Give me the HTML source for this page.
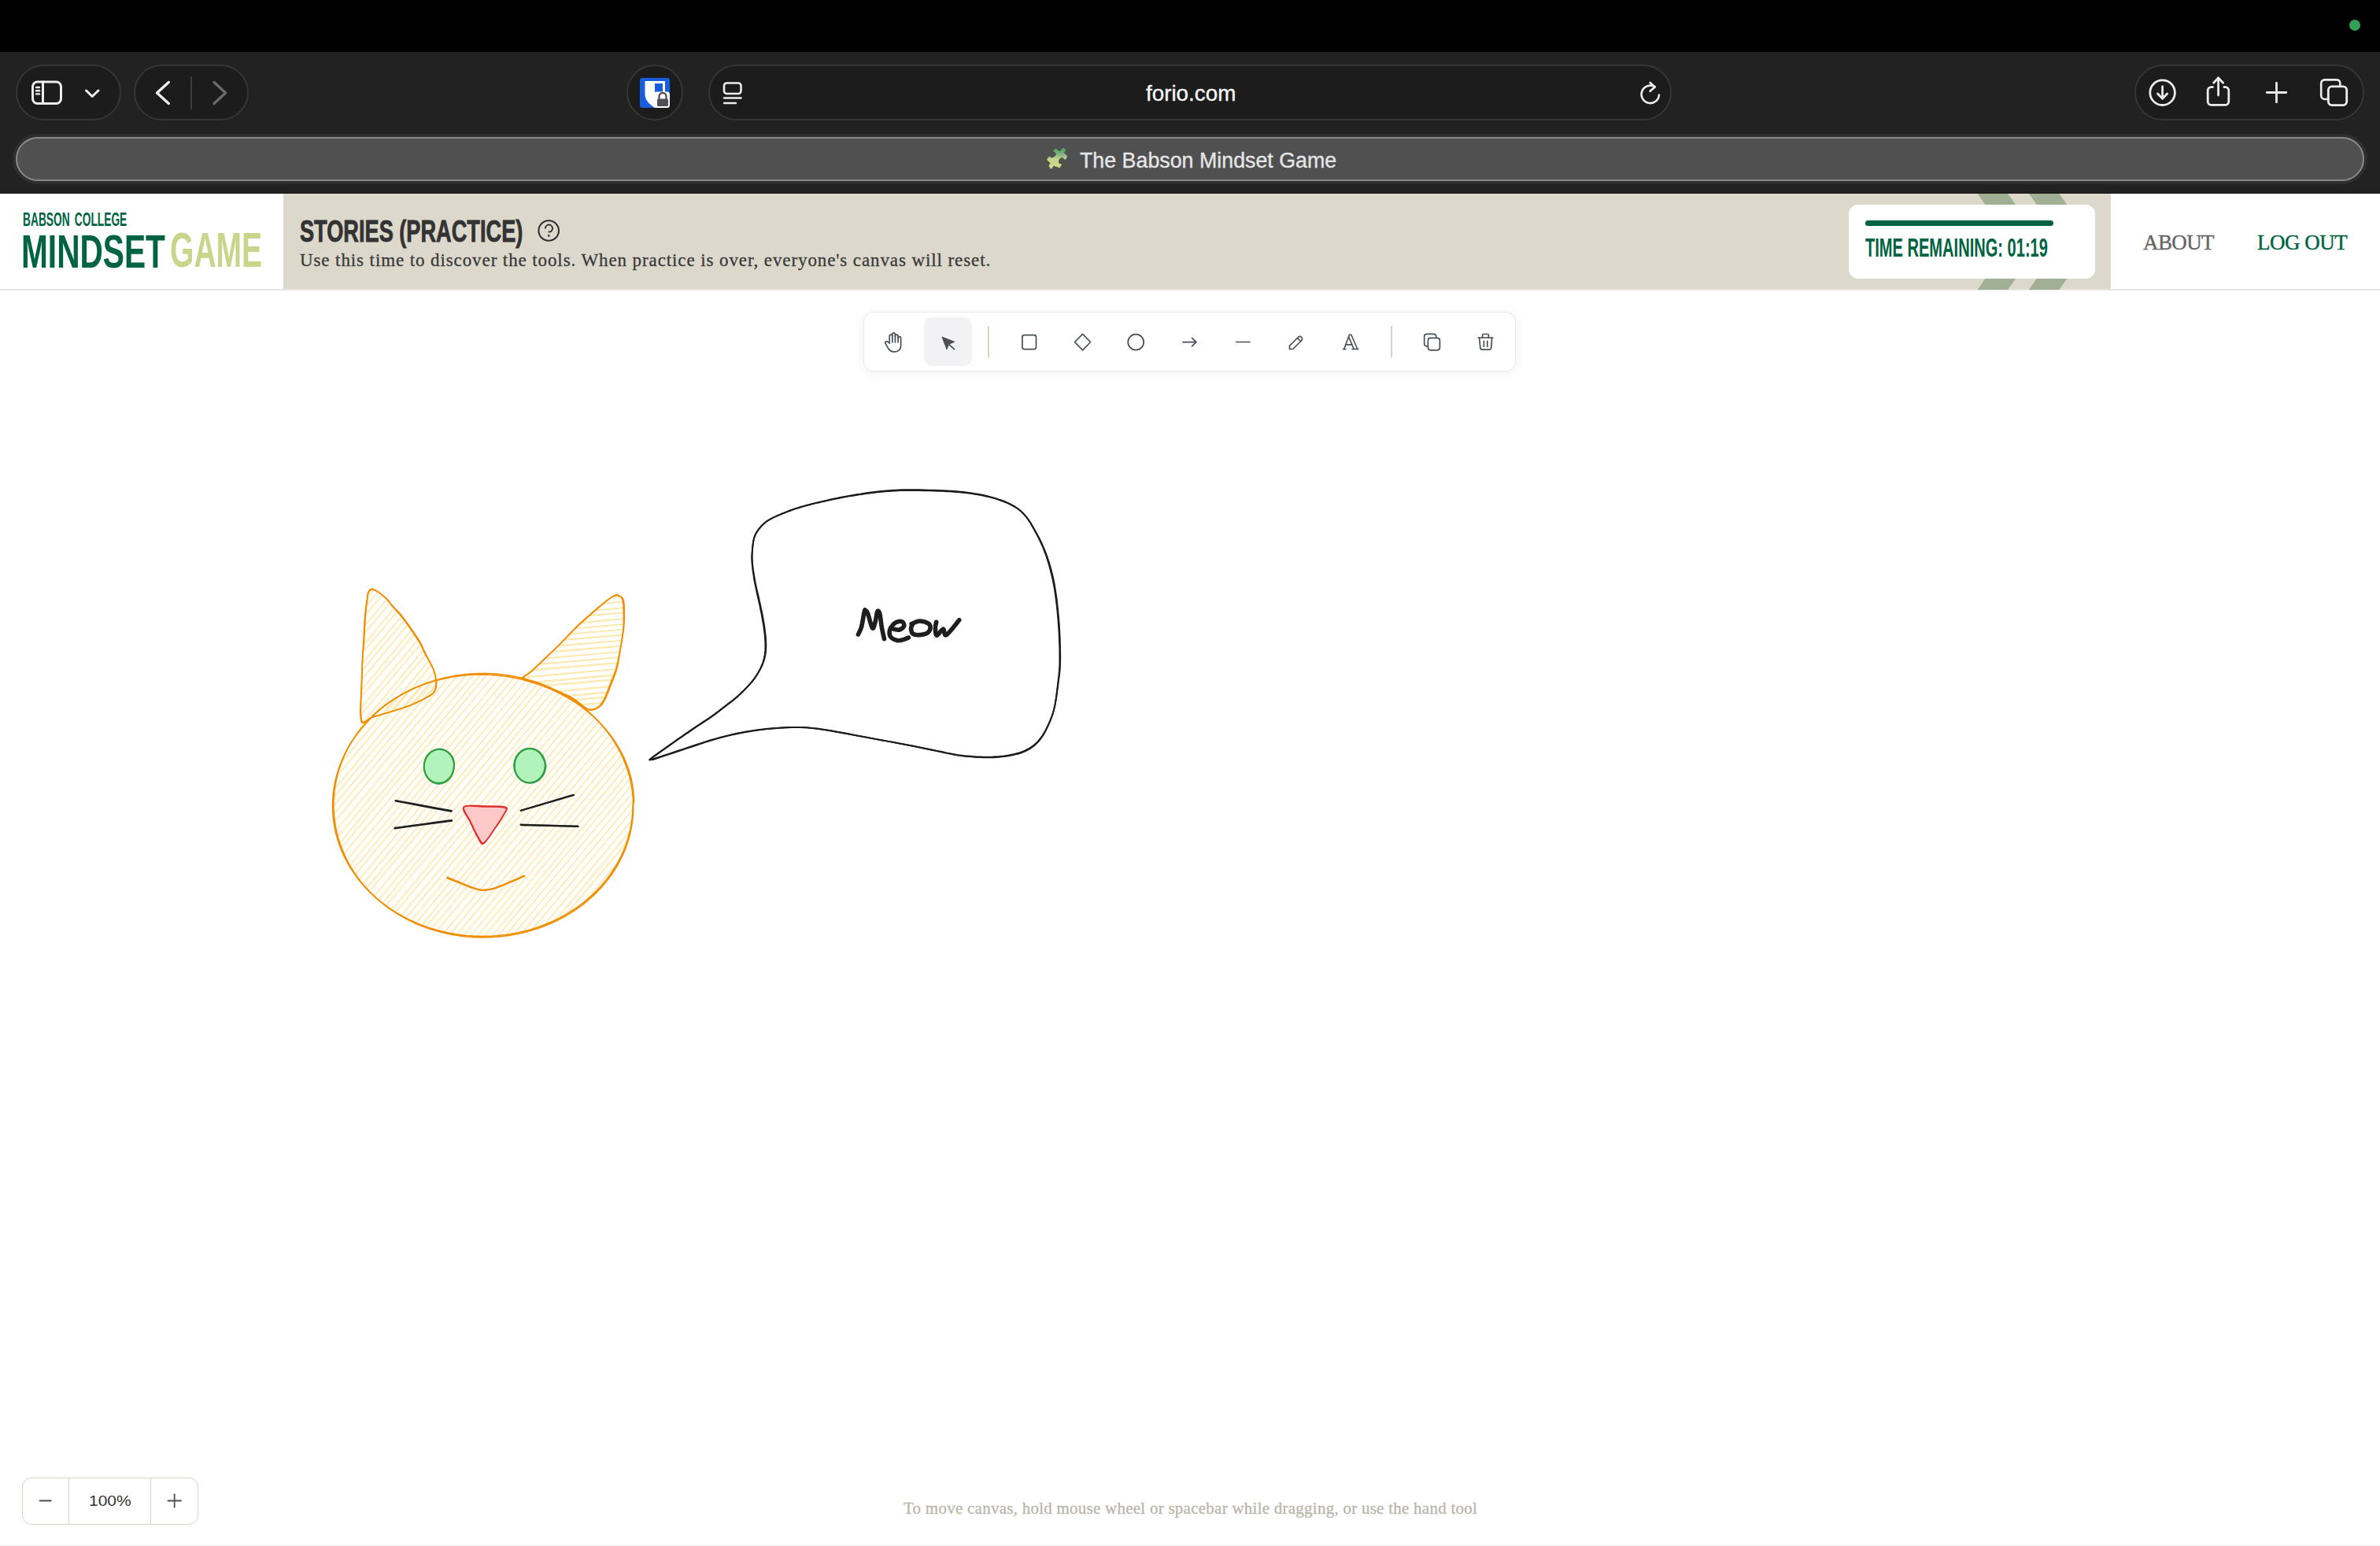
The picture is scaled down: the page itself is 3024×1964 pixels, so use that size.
<!DOCTYPE html>
<html><head><meta charset="utf-8">
<style>
*{margin:0;padding:0;box-sizing:border-box}
html,body{width:3024px;height:1964px;overflow:hidden;background:#fff;font-family:"Liberation Sans",sans-serif}
.a{position:absolute}
#top{left:0;top:0;width:3024px;height:66px;background:#000}
#tb{left:0;top:66px;width:3024px;height:180px;background:#222}
.pill{position:absolute;top:82px;height:71px;background:#1c1c1c;border:2px solid #363636;border-radius:36px}
#tabring{left:16px;top:170px;width:2992px;height:64px;background:#2f2f2f;border-radius:32px}
#tab{left:20px;top:174px;width:2984px;height:56px;background:#505050;border:2px solid #8a8a8a;border-radius:28px}
.ui{color:#ececec;font-size:27px;white-space:nowrap;-webkit-text-stroke:0.35px #ececec}
#hdr{left:0;top:246px;width:3024px;height:122px;background:#fff}
#hline{left:0;top:367px;width:3024px;height:2px;background:#e6e6e6}
#beige{left:360px;top:246px;width:2322px;height:122px;background:#dcd8cc;overflow:hidden}
.cond{display:inline-block;transform-origin:0 0;white-space:nowrap;font-weight:bold}
.serif{font-family:"Liberation Serif",serif}
</style></head><body>
<div class="a" id="top"></div>
<div class="a" style="left:2985px;top:25px;width:14px;height:14px;border-radius:7px;background:#33a157"></div>
<div class="a" id="tb"></div>

<!-- pills -->
<div class="pill" style="left:20px;width:134px"></div>
<div class="pill" style="left:170px;width:146px"></div>
<div class="pill" style="left:796px;width:72px"></div>
<div class="pill" style="left:900px;width:1224px"></div>
<div class="pill" style="left:2712px;width:292px"></div>

<div class="a" id="tabring"></div>
<div class="a" id="tab"></div>


<svg class="a" style="left:0;top:0" width="3024" height="246" fill="none" stroke-linecap="round" stroke-linejoin="round">
 <!-- sidebar -->
 <rect x="41.5" y="104" width="36" height="27.5" rx="6" stroke="#ececec" stroke-width="3"/>
 <line x1="54.5" y1="104" x2="54.5" y2="131.5" stroke="#ececec" stroke-width="3"/>
 <g stroke="#ececec" stroke-width="2.4"><line x1="46" y1="111" x2="50" y2="111"/><line x1="46" y1="115.2" x2="50" y2="115.2"/><line x1="46" y1="119.4" x2="50" y2="119.4"/></g>
 <polyline points="109.5,115 117.2,122.5 125,115" stroke="#ececec" stroke-width="3"/>
 <!-- back / fwd -->
 <polyline points="214.3,104.5 199.5,118 214.3,131.4" stroke="#ececec" stroke-width="3.4"/>
 <line x1="243" y1="98" x2="243" y2="138" stroke="#3e3e3e" stroke-width="2"/>
 <polyline points="272,104.5 286.6,118 272,131.4" stroke="#6b6b6e" stroke-width="3.4"/>
 <!-- reader -->
 <rect x="920" y="105.5" width="21.5" height="13.5" rx="3.5" stroke="#ececec" stroke-width="2.6"/>
 <line x1="920" y1="124.5" x2="941.5" y2="124.5" stroke="#ececec" stroke-width="2.4"/>
 <line x1="920" y1="131" x2="935" y2="131" stroke="#ececec" stroke-width="2.4"/>
 <!-- reload -->
 <path d="M2102.5 110.2 A11.2 11.2 0 1 0 2108 120.5" stroke="#ececec" stroke-width="2.6"/>
 <polyline points="2096.6,105 2102.8,110.4 2096.6,115.8" stroke="#ececec" stroke-width="2.6"/>
 <!-- download -->
 <circle cx="2747.6" cy="117.7" r="15.8" stroke="#ececec" stroke-width="2.8"/>
 <line x1="2747.6" y1="110" x2="2747.6" y2="125" stroke="#ececec" stroke-width="2.8"/>
 <polyline points="2741.5,119 2747.6,125.3 2753.7,119" stroke="#ececec" stroke-width="2.8"/>
 <!-- share -->
 <path d="M2811.5 110.6 H2809.5 A4.5 4.5 0 0 0 2805.2 115 V129 A4.5 4.5 0 0 0 2809.5 133.4 H2827.5 A4.5 4.5 0 0 0 2831.8 129 V115 A4.5 4.5 0 0 0 2827.5 110.6 H2825.8" stroke="#ececec" stroke-width="2.8"/>
 <line x1="2818.6" y1="99" x2="2818.6" y2="121" stroke="#ececec" stroke-width="2.8"/>
 <polyline points="2812.6,105.3 2818.6,99 2824.6,105.3" stroke="#ececec" stroke-width="2.8"/>
 <!-- plus -->
 <line x1="2880.3" y1="117.5" x2="2904.8" y2="117.5" stroke="#ececec" stroke-width="2.8"/>
 <line x1="2892.5" y1="105.3" x2="2892.5" y2="129.8" stroke="#ececec" stroke-width="2.8"/>
 <!-- tabs -->
 <path d="M2973.3 109.8 V105.5 A4.5 4.5 0 0 0 2969 101.4 H2953.7 A4.5 4.5 0 0 0 2949.2 105.5 V121.5 A4.5 4.5 0 0 0 2953.7 126 H2958.3" stroke="#ececec" stroke-width="2.6"/>
 <rect x="2958.3" y="109.8" width="23.4" height="23.8" rx="4.5" stroke="#ececec" stroke-width="2.8"/>
 <!-- bitwarden -->
 <rect x="813" y="99" width="38" height="38" rx="3" fill="#175ddc" stroke="none"/>
 <path d="M819.5 103 H845 V120 C845 128 838 133 832 137 C826 133 819.5 128 819.5 120 Z" fill="#fff" stroke="none"/>
 <path d="M832 106 H842 V120 C842 126 837 130 832 133 Z" fill="#175ddc" stroke="none"/>
 <rect x="830.5" y="116.5" width="20.5" height="20.5" rx="4" fill="#fff" stroke="none"/>
 <path d="M837.5 126 V122.5 A4.5 4.5 0 0 1 846.5 122.5 V126" stroke="#4f4f55" stroke-width="2.3"/>
 <rect x="835" y="125.5" width="14" height="9.5" rx="1.5" fill="#4f4f55" stroke="none"/>
 <!-- puzzle -->
 <defs><linearGradient id="pz" x1="0" y1="0" x2="0" y2="1"><stop offset="0" stop-color="#38a04e"/><stop offset="0.35" stop-color="#8fb489"/><stop offset="0.55" stop-color="#c6d68a"/><stop offset="1" stop-color="#cad98a"/></linearGradient></defs>
 <polygon points="1337.3,192.3 1340,189.1 1341.7,188.1 1343.4,189.4 1345.4,191.3 1347.3,191.1 1349.6,187.7 1351,187.2 1352.7,188.1 1355,190.6 1352.3,193.8 1356.9,198.7 1353.5,203.4 1350,200.7 1348.1,200.7 1346.1,202.4 1345.4,205.3 1345.9,207.3 1349.8,208.8 1346.1,214.2 1344.1,212.7 1338.7,211.2 1336.8,214.4 1334.6,214.9 1332.1,210.7 1334.1,207.3 1330.1,203.6 1330.1,201.7 1333.3,198 1335.5,199.9 1337.8,199.7 1340.7,197.7 1341.7,195.8 1340.2,193.8" fill="url(#pz)" stroke="#3a3a3a" stroke-width="0.6" stroke-linejoin="round"/>
</svg>
<div class="a ui" id="url" style="left:1456px;top:103px;font-size:27.8px;color:#f7f7f7;-webkit-text-stroke:0.35px #f7f7f7">forio.com</div>
<div class="a ui" id="tabt" style="left:1372px;top:188.5px;font-size:26.8px;color:#e6e6e6;-webkit-text-stroke:0.35px #e6e6e6">The Babson Mindset Game</div>

<div class="a" id="hdr"></div>
<div class="a" style="left:0;top:245px;width:3024px;height:1px;background:#141414"></div>
<div class="a" id="beige"></div>
<div class="a" id="hline"></div>


<!-- logo -->
<div class="a" id="logo1" style="left:29px;top:265px;color:#006341;font-size:24.5px;"><span class="cond" id="bc" style="transform:scaleX(0.562);word-spacing:4px">BABSON COLLEGE</span></div>
<div class="a" style="left:27px;top:286px;color:#006341;font-size:59px;"><span class="cond" id="mind" style="transform:scaleX(0.689)">MINDSET</span></div>
<div class="a" style="left:216px;top:281px;color:#c8d58b;font-size:63.5px;"><span class="cond" id="game" style="transform:scaleX(0.615)">GAME</span></div>
<div class="a" style="left:381px;top:273px;color:#333;font-size:38px;"><span class="cond" id="stories" style="transform:scaleX(0.715);-webkit-text-stroke:0.9px #333">STORIES (PRACTICE)</span></div>
<svg class="a" style="left:0;top:246px" width="760" height="122" fill="none" stroke="#2e2e2e" stroke-width="2" stroke-linecap="round"><circle cx="697.2" cy="47" r="12.8"/><path d="M693 43.6 A4.5 4.5 0 1 1 697.6 48.6"/><circle cx="697.3" cy="53.4" r="1.3" fill="#2e2e2e" stroke="none"/></svg>
<div class="a serif" id="sub" style="left:381px;top:318px;color:#3a3a3a;font-size:23px;letter-spacing:0.9px;-webkit-text-stroke:0.3px #3a3a3a;white-space:nowrap">Use this time to discover the tools. When practice is over, everyone's canvas will reset.</div>
<div class="a serif" id="about" style="left:2723px;top:293px;color:#666;font-size:27px;letter-spacing:-0.6px;-webkit-text-stroke:0.4px #666;white-space:nowrap">ABOUT</div>
<div class="a serif" id="logout" style="left:2868px;top:293px;color:#006341;font-size:27px;letter-spacing:-0.5px;-webkit-text-stroke:0.4px #006341;white-space:nowrap">LOG OUT</div>
<svg class="a" style="left:0;top:0" width="3024" height="400"><polygon fill="#a1b094" points="2512.6,246 2551.2,246 2594,307 2551.2,368 2512.6,368 2555.3,307"/><polygon fill="#a1b094" points="2578,246 2616.5,246 2659.3,307 2616.5,368 2578,368 2620.7,307"/></svg>
<div class="a" style="left:2349px;top:260px;width:313px;height:94px;background:#fff;border-radius:12px"></div>
<div class="a" style="left:2370px;top:280px;width:239px;height:7px;background:#006341;border-radius:4px"></div>
<div class="a" style="left:2370px;top:296px;color:#006341;font-size:33px;"><span class="cond" id="time" style="transform:scaleX(0.608)">TIME REMAINING: 01:19</span></div>

<!--CANVAS--><svg class="a" style="left:0;top:0" width="3024" height="1964" fill="none" stroke-linecap="round" stroke-linejoin="round"><defs><clipPath id="chead"><path d="M804.6 1022.8 C804.6 1035.2 803.0 1047.9 799.8 1060.0 C796.7 1072.0 791.8 1084.1 785.7 1095.3 C779.5 1106.4 771.8 1117.2 762.9 1126.9 C754.1 1136.6 743.8 1145.6 732.7 1153.4 C721.6 1161.1 709.2 1167.9 696.5 1173.3 C683.7 1178.6 669.9 1182.9 656.1 1185.6 C642.3 1188.4 627.8 1189.8 613.6 1189.8 C599.4 1189.8 584.9 1188.4 571.1 1185.6 C557.3 1182.9 543.5 1178.6 530.7 1173.3 C518.0 1167.9 505.6 1161.1 494.5 1153.4 C483.4 1145.6 473.1 1136.6 464.3 1126.9 C455.4 1117.2 447.7 1106.4 441.5 1095.3 C435.4 1084.1 430.5 1072.0 427.4 1060.0 C424.2 1047.9 422.6 1035.2 422.6 1022.8 C422.6 1010.4 424.2 997.7 427.4 985.6 C430.5 973.6 435.4 961.5 441.5 950.3 C447.7 939.2 455.4 928.4 464.3 918.7 C473.1 909.0 483.4 900.0 494.5 892.2 C505.6 884.5 518.0 877.7 530.7 872.3 C543.5 867.0 557.3 862.7 571.1 860.0 C584.9 857.2 599.4 855.8 613.6 855.8 C627.8 855.8 642.3 857.2 656.1 860.0 C669.9 862.7 683.7 867.0 696.5 872.3 C709.2 877.7 721.6 884.5 732.7 892.2 C743.8 900.0 754.1 909.0 762.9 918.7 C771.8 928.4 779.5 939.2 785.7 950.3 C791.8 961.5 796.7 973.6 799.8 985.6 C803.0 997.7 804.6 1010.4 804.6 1022.8 Z"/></clipPath><clipPath id="clear"><path d="M475.0 749.0 C478.4 749.9 484.8 754.6 488.8 758.1 C492.8 761.6 495.3 765.4 499.2 769.8 C503.1 774.2 506.8 776.9 512.4 784.3 C518.0 791.7 528.4 806.5 533.1 814.1 C537.8 821.7 537.7 824.1 540.6 830.0 C543.5 835.9 548.1 844.0 550.3 849.4 C552.4 854.8 553.0 858.5 553.5 862.3 C554.0 866.1 554.0 869.0 553.5 872.0 C553.0 875.0 552.4 878.0 550.3 880.5 C548.1 883.0 545.5 884.3 540.6 886.9 C535.8 889.5 528.8 893.1 521.2 896.0 C513.7 898.9 503.4 901.9 495.3 904.4 C487.2 906.9 478.6 909.0 472.6 910.9 C466.6 912.8 461.6 922.5 459.5 915.5 C457.4 908.5 459.5 883.0 459.7 868.8 C459.9 854.5 460.4 838.0 460.7 830.0 C461.0 822.0 460.8 828.8 461.3 820.6 C461.8 812.4 462.7 790.5 463.5 781.0 C464.3 771.5 465.2 768.0 466.0 763.3 C466.8 758.6 466.6 755.3 468.1 752.9 C469.6 750.5 471.6 748.1 475.0 749.0 Z"/></clipPath><clipPath id="crear"><path d="M785.2 756.4 C787.8 756.7 790.1 758.0 791.3 762.0 C792.5 766.0 792.4 774.4 792.5 780.7 C792.6 787.0 792.6 792.0 791.8 800.0 C791.0 808.0 788.9 820.2 787.5 828.5 C786.1 836.8 785.1 843.3 783.3 849.8 C781.5 856.3 779.4 861.1 776.9 867.6 C774.4 874.1 771.0 883.8 768.3 889.0 C765.6 894.2 763.6 896.6 760.5 898.9 C757.4 901.1 753.1 902.6 749.8 902.5 C746.5 902.4 743.9 900.3 740.6 898.2 C737.3 896.1 733.7 892.3 729.9 889.7 C726.1 887.1 722.8 885.1 717.8 882.6 C712.8 880.1 705.1 877.2 700.0 875.0 C694.9 872.8 693.2 871.5 687.3 869.3 C681.4 867.0 666.9 864.2 664.7 861.5 C662.6 858.8 669.5 857.5 674.4 853.1 C679.2 848.7 687.3 841.1 693.8 835.0 C700.3 828.9 706.7 822.7 713.2 816.2 C719.7 809.7 726.6 802.0 732.6 796.2 C738.6 790.4 744.6 785.5 749.4 781.3 C754.2 777.1 757.0 774.5 761.4 771.0 C765.8 767.5 771.6 762.4 775.6 760.0 C779.6 757.6 782.6 756.1 785.2 756.4 Z"/></clipPath></defs><g clip-path="url(#chead)" stroke="#ffe39a" stroke-width="0.95"><line x1="243.1" y1="1055.0" x2="581.5" y2="651.6"/><line x1="244.9" y1="1056.4" x2="582.1" y2="652.0"/><line x1="248.5" y1="1059.5" x2="586.9" y2="656.1"/><line x1="249.9" y1="1060.6" x2="587.3" y2="656.4"/><line x1="253.8" y1="1063.9" x2="592.3" y2="660.6"/><line x1="252.2" y1="1062.6" x2="591.8" y2="660.2"/><line x1="259.2" y1="1068.4" x2="597.6" y2="665.1"/><line x1="258.1" y1="1067.6" x2="597.3" y2="664.8"/><line x1="264.5" y1="1072.9" x2="603.0" y2="669.6"/><line x1="262.8" y1="1071.5" x2="602.5" y2="669.2"/><line x1="269.9" y1="1077.4" x2="608.4" y2="674.1"/><line x1="269.2" y1="1076.9" x2="608.2" y2="673.9"/><line x1="275.3" y1="1081.9" x2="613.7" y2="678.6"/><line x1="276.4" y1="1082.9" x2="614.1" y2="678.9"/><line x1="280.6" y1="1086.4" x2="619.1" y2="683.1"/><line x1="279.9" y1="1085.8" x2="618.9" y2="682.9"/><line x1="286.0" y1="1090.9" x2="624.4" y2="687.6"/><line x1="286.7" y1="1091.5" x2="624.7" y2="687.8"/><line x1="291.3" y1="1095.4" x2="629.8" y2="692.1"/><line x1="289.6" y1="1094.0" x2="629.3" y2="691.6"/><line x1="296.7" y1="1099.9" x2="635.2" y2="696.6"/><line x1="295.4" y1="1098.8" x2="634.8" y2="696.3"/><line x1="302.1" y1="1104.4" x2="640.5" y2="701.1"/><line x1="302.7" y1="1105.0" x2="640.7" y2="701.3"/><line x1="307.4" y1="1108.9" x2="645.9" y2="705.6"/><line x1="306.8" y1="1108.4" x2="645.7" y2="705.4"/><line x1="312.8" y1="1113.4" x2="651.3" y2="710.1"/><line x1="311.8" y1="1112.6" x2="651.0" y2="709.8"/><line x1="318.2" y1="1117.9" x2="656.6" y2="714.6"/><line x1="316.9" y1="1116.9" x2="656.2" y2="714.3"/><line x1="323.5" y1="1122.4" x2="662.0" y2="719.1"/><line x1="324.8" y1="1123.5" x2="662.4" y2="719.4"/><line x1="328.9" y1="1126.9" x2="667.3" y2="723.6"/><line x1="328.1" y1="1126.3" x2="667.1" y2="723.4"/><line x1="334.2" y1="1131.4" x2="672.7" y2="728.1"/><line x1="333.2" y1="1130.5" x2="672.4" y2="727.8"/><line x1="339.6" y1="1135.9" x2="678.1" y2="732.6"/><line x1="338.3" y1="1134.8" x2="677.7" y2="732.3"/><line x1="345.0" y1="1140.4" x2="683.4" y2="737.1"/><line x1="343.8" y1="1139.4" x2="683.1" y2="736.8"/><line x1="350.3" y1="1144.9" x2="688.8" y2="741.6"/><line x1="351.9" y1="1146.3" x2="689.3" y2="742.0"/><line x1="355.7" y1="1149.4" x2="694.2" y2="746.1"/><line x1="357.0" y1="1150.6" x2="694.6" y2="746.4"/><line x1="361.1" y1="1153.9" x2="699.5" y2="750.6"/><line x1="362.1" y1="1154.8" x2="699.8" y2="750.8"/><line x1="366.4" y1="1158.4" x2="704.9" y2="755.1"/><line x1="364.8" y1="1157.1" x2="704.4" y2="754.7"/><line x1="371.8" y1="1162.9" x2="710.2" y2="759.6"/><line x1="371.1" y1="1162.3" x2="710.0" y2="759.4"/><line x1="377.1" y1="1167.4" x2="715.6" y2="764.1"/><line x1="378.4" y1="1168.5" x2="716.0" y2="764.4"/><line x1="382.5" y1="1171.9" x2="721.0" y2="768.6"/><line x1="384.0" y1="1173.2" x2="721.4" y2="769.0"/><line x1="387.9" y1="1176.4" x2="726.3" y2="773.1"/><line x1="389.2" y1="1177.6" x2="726.7" y2="773.4"/><line x1="393.2" y1="1180.9" x2="731.7" y2="777.6"/><line x1="392.5" y1="1180.3" x2="731.5" y2="777.4"/><line x1="398.6" y1="1185.4" x2="737.1" y2="782.1"/><line x1="399.4" y1="1186.1" x2="737.3" y2="782.3"/><line x1="404.0" y1="1189.9" x2="742.4" y2="786.6"/><line x1="404.8" y1="1190.6" x2="742.7" y2="786.8"/><line x1="409.3" y1="1194.4" x2="747.8" y2="791.1"/><line x1="410.5" y1="1195.4" x2="748.1" y2="791.4"/><line x1="414.7" y1="1198.9" x2="753.1" y2="795.6"/><line x1="413.1" y1="1197.6" x2="752.7" y2="795.2"/><line x1="420.0" y1="1203.4" x2="758.5" y2="800.1"/><line x1="421.1" y1="1204.3" x2="758.8" y2="800.3"/><line x1="425.4" y1="1207.9" x2="763.9" y2="804.6"/><line x1="426.7" y1="1209.1" x2="764.3" y2="804.9"/><line x1="430.8" y1="1212.4" x2="769.2" y2="809.1"/><line x1="431.5" y1="1213.0" x2="769.4" y2="809.2"/><line x1="436.1" y1="1216.9" x2="774.6" y2="813.6"/><line x1="434.4" y1="1215.4" x2="774.1" y2="813.1"/><line x1="441.5" y1="1221.4" x2="780.0" y2="818.1"/><line x1="443.0" y1="1222.7" x2="780.4" y2="818.4"/><line x1="446.9" y1="1225.9" x2="785.3" y2="822.6"/><line x1="446.2" y1="1225.4" x2="785.1" y2="822.4"/><line x1="452.2" y1="1230.4" x2="790.7" y2="827.1"/><line x1="453.6" y1="1231.6" x2="791.1" y2="827.4"/><line x1="457.6" y1="1234.9" x2="796.0" y2="831.6"/><line x1="458.5" y1="1235.7" x2="796.3" y2="831.8"/><line x1="462.9" y1="1239.4" x2="801.4" y2="836.1"/><line x1="464.6" y1="1240.9" x2="801.9" y2="836.5"/><line x1="468.3" y1="1243.9" x2="806.8" y2="840.6"/><line x1="468.9" y1="1244.5" x2="807.0" y2="840.7"/><line x1="473.7" y1="1248.4" x2="812.1" y2="845.1"/><line x1="474.7" y1="1249.3" x2="812.4" y2="845.3"/><line x1="479.0" y1="1252.9" x2="817.5" y2="849.6"/><line x1="477.8" y1="1251.9" x2="817.1" y2="849.3"/><line x1="484.4" y1="1257.4" x2="822.9" y2="854.1"/><line x1="482.8" y1="1256.1" x2="822.4" y2="853.7"/><line x1="489.8" y1="1261.9" x2="828.2" y2="858.6"/><line x1="488.2" y1="1260.7" x2="827.8" y2="858.2"/><line x1="495.1" y1="1266.4" x2="833.6" y2="863.1"/><line x1="496.2" y1="1267.3" x2="833.9" y2="863.3"/><line x1="500.5" y1="1270.9" x2="838.9" y2="867.6"/><line x1="501.2" y1="1271.5" x2="839.2" y2="867.7"/><line x1="505.8" y1="1275.4" x2="844.3" y2="872.1"/><line x1="506.9" y1="1276.4" x2="844.6" y2="872.3"/><line x1="511.2" y1="1279.9" x2="849.7" y2="876.6"/><line x1="512.9" y1="1281.3" x2="850.2" y2="877.0"/><line x1="516.6" y1="1284.4" x2="855.0" y2="881.1"/><line x1="518.2" y1="1285.8" x2="855.5" y2="881.5"/><line x1="521.9" y1="1288.9" x2="860.4" y2="885.6"/><line x1="523.4" y1="1290.2" x2="860.8" y2="885.9"/><line x1="527.3" y1="1293.4" x2="865.8" y2="890.1"/><line x1="528.7" y1="1294.6" x2="866.2" y2="890.4"/><line x1="532.7" y1="1297.9" x2="871.1" y2="894.6"/><line x1="534.4" y1="1299.4" x2="871.7" y2="895.0"/><line x1="538.0" y1="1302.4" x2="876.5" y2="899.1"/><line x1="537.3" y1="1301.8" x2="876.3" y2="898.9"/><line x1="543.4" y1="1306.9" x2="881.8" y2="903.6"/><line x1="542.5" y1="1306.2" x2="881.6" y2="903.3"/><line x1="548.7" y1="1311.4" x2="887.2" y2="908.1"/><line x1="548.1" y1="1310.9" x2="887.0" y2="907.9"/><line x1="554.1" y1="1315.9" x2="892.6" y2="912.6"/><line x1="553.2" y1="1315.1" x2="892.3" y2="912.3"/><line x1="559.5" y1="1320.4" x2="897.9" y2="917.1"/><line x1="558.7" y1="1319.8" x2="897.7" y2="916.9"/><line x1="564.8" y1="1324.9" x2="903.3" y2="921.6"/><line x1="566.2" y1="1326.1" x2="903.7" y2="921.9"/><line x1="570.2" y1="1329.4" x2="908.7" y2="926.1"/><line x1="572.0" y1="1330.9" x2="909.2" y2="926.5"/><line x1="575.6" y1="1333.9" x2="914.0" y2="930.6"/><line x1="574.4" y1="1332.9" x2="913.7" y2="930.3"/><line x1="580.9" y1="1338.4" x2="919.4" y2="935.1"/><line x1="582.0" y1="1339.3" x2="919.7" y2="935.3"/><line x1="586.3" y1="1342.9" x2="924.7" y2="939.6"/><line x1="587.0" y1="1343.5" x2="925.0" y2="939.7"/><line x1="591.6" y1="1347.4" x2="930.1" y2="944.1"/><line x1="592.3" y1="1348.0" x2="930.3" y2="944.2"/><line x1="597.0" y1="1351.9" x2="935.5" y2="948.6"/><line x1="595.2" y1="1350.4" x2="934.9" y2="948.1"/><line x1="602.4" y1="1356.4" x2="940.8" y2="953.1"/><line x1="603.2" y1="1357.1" x2="941.1" y2="953.3"/><line x1="607.7" y1="1360.9" x2="946.2" y2="957.6"/><line x1="609.1" y1="1362.0" x2="946.6" y2="957.9"/><line x1="613.1" y1="1365.4" x2="951.5" y2="962.1"/><line x1="612.5" y1="1364.9" x2="951.4" y2="961.9"/><line x1="618.5" y1="1369.9" x2="956.9" y2="966.6"/><line x1="617.2" y1="1368.9" x2="956.5" y2="966.2"/><line x1="623.8" y1="1374.4" x2="962.3" y2="971.1"/><line x1="625.2" y1="1375.6" x2="962.7" y2="971.4"/><line x1="629.2" y1="1378.9" x2="967.6" y2="975.6"/><line x1="627.5" y1="1377.5" x2="967.1" y2="975.1"/><line x1="634.5" y1="1383.4" x2="973.0" y2="980.1"/><line x1="635.3" y1="1384.1" x2="973.2" y2="980.3"/><line x1="639.9" y1="1387.9" x2="978.4" y2="984.6"/><line x1="641.7" y1="1389.4" x2="978.9" y2="985.0"/><line x1="645.3" y1="1392.4" x2="983.7" y2="989.1"/><line x1="646.5" y1="1393.4" x2="984.1" y2="989.4"/></g><g clip-path="url(#clear)" stroke="#ffe39a" stroke-width="0.95"><line x1="356.4" y1="845.6" x2="493.4" y2="682.4"/><line x1="354.8" y1="844.2" x2="492.9" y2="682.0"/><line x1="361.8" y1="850.1" x2="498.7" y2="686.9"/><line x1="363.0" y1="851.1" x2="499.1" y2="687.2"/><line x1="367.1" y1="854.6" x2="504.1" y2="691.4"/><line x1="367.9" y1="855.2" x2="504.3" y2="691.6"/><line x1="372.5" y1="859.1" x2="509.5" y2="695.9"/><line x1="371.0" y1="857.8" x2="509.0" y2="695.5"/><line x1="377.9" y1="863.6" x2="514.8" y2="700.4"/><line x1="379.1" y1="864.6" x2="515.2" y2="700.7"/><line x1="383.2" y1="868.1" x2="520.2" y2="704.9"/><line x1="382.0" y1="867.1" x2="519.8" y2="704.6"/><line x1="388.6" y1="872.6" x2="525.5" y2="709.4"/><line x1="386.8" y1="871.1" x2="525.0" y2="709.0"/><line x1="394.0" y1="877.1" x2="530.9" y2="713.9"/><line x1="394.7" y1="877.8" x2="531.1" y2="714.1"/><line x1="399.3" y1="881.6" x2="536.3" y2="718.4"/><line x1="397.8" y1="880.3" x2="535.8" y2="718.0"/><line x1="404.7" y1="886.1" x2="541.6" y2="722.9"/><line x1="406.5" y1="887.6" x2="542.2" y2="723.4"/><line x1="410.0" y1="890.6" x2="547.0" y2="727.4"/><line x1="408.6" y1="889.4" x2="546.6" y2="727.0"/><line x1="415.4" y1="895.1" x2="552.4" y2="731.9"/><line x1="416.6" y1="896.2" x2="552.7" y2="732.2"/><line x1="420.8" y1="899.6" x2="557.7" y2="736.4"/><line x1="419.7" y1="898.7" x2="557.4" y2="736.1"/><line x1="426.1" y1="904.1" x2="563.1" y2="740.9"/><line x1="424.9" y1="903.1" x2="562.7" y2="740.6"/><line x1="431.5" y1="908.6" x2="568.4" y2="745.4"/><line x1="432.9" y1="909.8" x2="568.9" y2="745.8"/><line x1="436.9" y1="913.1" x2="573.8" y2="749.9"/><line x1="435.2" y1="911.8" x2="573.3" y2="749.5"/><line x1="442.2" y1="917.6" x2="579.2" y2="754.4"/><line x1="443.7" y1="918.9" x2="579.6" y2="754.8"/><line x1="447.6" y1="922.1" x2="584.5" y2="758.9"/><line x1="446.7" y1="921.4" x2="584.3" y2="758.7"/><line x1="452.9" y1="926.6" x2="589.9" y2="763.4"/><line x1="454.0" y1="927.5" x2="590.2" y2="763.7"/><line x1="458.3" y1="931.1" x2="595.3" y2="767.9"/><line x1="456.5" y1="929.6" x2="594.7" y2="767.4"/><line x1="463.7" y1="935.6" x2="600.6" y2="772.4"/><line x1="464.9" y1="936.6" x2="601.0" y2="772.7"/><line x1="469.0" y1="940.1" x2="606.0" y2="776.9"/><line x1="467.6" y1="938.9" x2="605.5" y2="776.5"/><line x1="474.4" y1="944.6" x2="611.3" y2="781.4"/><line x1="475.5" y1="945.6" x2="611.7" y2="781.7"/><line x1="479.7" y1="949.1" x2="616.7" y2="785.9"/><line x1="481.5" y1="950.6" x2="617.2" y2="786.4"/><line x1="485.1" y1="953.6" x2="622.1" y2="790.4"/><line x1="485.8" y1="954.2" x2="622.3" y2="790.6"/><line x1="490.5" y1="958.1" x2="627.4" y2="794.9"/><line x1="489.6" y1="957.4" x2="627.2" y2="794.7"/><line x1="495.8" y1="962.6" x2="632.8" y2="799.4"/><line x1="494.8" y1="961.8" x2="632.5" y2="799.1"/><line x1="501.2" y1="967.1" x2="638.2" y2="803.9"/><line x1="502.6" y1="968.3" x2="638.6" y2="804.2"/><line x1="506.6" y1="971.6" x2="643.5" y2="808.4"/><line x1="505.4" y1="970.6" x2="643.2" y2="808.1"/><line x1="511.9" y1="976.1" x2="648.9" y2="812.9"/><line x1="513.5" y1="977.5" x2="649.4" y2="813.3"/><line x1="517.3" y1="980.6" x2="654.2" y2="817.4"/><line x1="515.6" y1="979.2" x2="653.7" y2="817.0"/></g><g clip-path="url(#crear)" stroke="#ffe39a" stroke-width="0.95"><line x1="610.5" y1="731.4" x2="826.6" y2="712.5"/><line x1="610.3" y1="729.1" x2="826.6" y2="711.8"/><line x1="611.1" y1="738.4" x2="827.2" y2="719.5"/><line x1="611.0" y1="736.8" x2="827.2" y2="719.0"/><line x1="611.7" y1="745.3" x2="827.8" y2="726.4"/><line x1="611.6" y1="743.8" x2="827.8" y2="726.0"/><line x1="612.3" y1="752.3" x2="828.4" y2="733.4"/><line x1="612.4" y1="753.2" x2="828.5" y2="733.7"/><line x1="612.9" y1="759.3" x2="829.1" y2="740.4"/><line x1="613.1" y1="760.8" x2="829.1" y2="740.8"/><line x1="613.5" y1="766.3" x2="829.7" y2="747.3"/><line x1="613.4" y1="764.3" x2="829.6" y2="746.8"/><line x1="614.1" y1="773.2" x2="830.3" y2="754.3"/><line x1="613.9" y1="770.8" x2="830.2" y2="753.6"/><line x1="614.7" y1="780.2" x2="830.9" y2="761.3"/><line x1="614.7" y1="779.2" x2="830.9" y2="761.0"/><line x1="615.4" y1="787.2" x2="831.5" y2="768.3"/><line x1="615.5" y1="789.3" x2="831.5" y2="768.9"/><line x1="616.0" y1="794.1" x2="832.1" y2="775.2"/><line x1="615.8" y1="792.4" x2="832.1" y2="774.7"/><line x1="616.6" y1="801.1" x2="832.7" y2="782.2"/><line x1="616.7" y1="803.0" x2="832.8" y2="782.8"/><line x1="617.2" y1="808.1" x2="833.3" y2="789.2"/><line x1="617.3" y1="809.1" x2="833.4" y2="789.5"/><line x1="617.8" y1="815.1" x2="833.9" y2="796.2"/><line x1="617.7" y1="814.2" x2="833.9" y2="795.9"/><line x1="618.4" y1="822.0" x2="834.5" y2="803.1"/><line x1="618.3" y1="820.4" x2="834.5" y2="802.6"/><line x1="619.0" y1="829.0" x2="835.2" y2="810.1"/><line x1="618.9" y1="827.5" x2="835.1" y2="809.7"/><line x1="619.6" y1="836.0" x2="835.8" y2="817.1"/><line x1="619.4" y1="833.9" x2="835.7" y2="816.4"/><line x1="620.2" y1="843.0" x2="836.4" y2="824.1"/><line x1="620.2" y1="842.1" x2="836.4" y2="823.8"/><line x1="620.9" y1="849.9" x2="837.0" y2="831.0"/><line x1="620.7" y1="848.7" x2="837.0" y2="830.6"/><line x1="621.5" y1="856.9" x2="837.6" y2="838.0"/><line x1="621.3" y1="854.9" x2="837.5" y2="837.4"/><line x1="622.1" y1="863.9" x2="838.2" y2="845.0"/><line x1="622.2" y1="865.1" x2="838.2" y2="845.3"/><line x1="622.7" y1="870.9" x2="838.8" y2="851.9"/><line x1="622.9" y1="873.0" x2="838.9" y2="852.6"/><line x1="623.3" y1="877.8" x2="839.4" y2="858.9"/><line x1="623.1" y1="875.6" x2="839.4" y2="858.2"/><line x1="623.9" y1="884.8" x2="840.0" y2="865.9"/><line x1="624.1" y1="887.0" x2="840.1" y2="866.6"/><line x1="624.5" y1="891.8" x2="840.6" y2="872.9"/><line x1="624.7" y1="893.9" x2="840.7" y2="873.5"/><line x1="625.1" y1="898.7" x2="841.3" y2="879.8"/><line x1="625.0" y1="897.1" x2="841.2" y2="879.3"/><line x1="625.7" y1="905.7" x2="841.9" y2="886.8"/><line x1="625.5" y1="903.5" x2="841.8" y2="886.2"/><line x1="626.3" y1="912.7" x2="842.5" y2="893.8"/><line x1="626.2" y1="910.9" x2="842.4" y2="893.3"/><line x1="627.0" y1="919.7" x2="843.1" y2="900.8"/><line x1="626.9" y1="918.6" x2="843.1" y2="900.4"/><line x1="627.6" y1="926.6" x2="843.7" y2="907.7"/><line x1="627.7" y1="928.4" x2="843.7" y2="908.3"/><line x1="628.2" y1="933.6" x2="844.3" y2="914.7"/><line x1="628.0" y1="931.9" x2="844.3" y2="914.2"/><line x1="628.8" y1="940.6" x2="844.9" y2="921.7"/><line x1="628.9" y1="942.5" x2="845.0" y2="922.2"/></g><path d="M804.1 1022.8 L804.0 1027.5 L803.8 1032.1 L803.4 1036.8 L802.9 1041.5 L802.2 1046.1 L801.4 1050.7 L800.5 1055.3 L799.4 1059.8 L798.1 1064.3 L796.7 1068.8 L795.2 1073.3 L793.5 1077.7 L791.7 1082.1 L789.7 1086.5 L787.6 1090.7 L785.4 1095.0 L783.1 1099.1 L780.6 1103.2 L777.9 1107.3 L775.2 1111.3 L772.3 1115.2 L769.3 1119.1 L766.1 1122.8 L762.9 1126.5 L759.5 1130.1 L756.0 1133.6 L752.4 1137.1 L748.7 1140.4 L744.9 1143.7 L741.0 1146.9 L736.9 1149.9 L732.8 1152.9 L728.6 1155.7 L724.3 1158.5 L719.9 1161.1 L715.4 1163.7 L710.9 1166.1 L706.2 1168.5 L701.5 1170.7 L696.8 1172.8 L691.9 1174.7 L687.0 1176.6 L682.1 1178.3 L677.0 1179.9 L671.9 1181.4 L666.8 1182.8 L661.6 1184.0 L656.5 1185.2 L651.2 1186.1 L646.0 1187.0 L640.7 1187.7 L635.3 1188.3 L630.0 1188.8 L624.6 1189.2 L619.3 1189.4 L613.9 1189.5 L608.6 1189.4 L603.2 1189.2 L597.8 1188.9 L592.5 1188.5 L587.1 1187.9 L581.8 1187.2 L576.5 1186.4 L571.3 1185.4 L566.1 1184.3 L560.9 1183.1 L555.7 1181.8 L550.6 1180.3 L545.6 1178.7 L540.6 1177.0 L535.6 1175.2 L530.7 1173.2 L525.9 1171.1 L521.2 1169.0 L516.5 1166.7 L511.9 1164.2 L507.4 1161.7 L503.0 1159.1 L498.6 1156.3 L494.4 1153.5 L490.2 1150.5 L486.2 1147.5 L482.2 1144.3 L478.3 1141.1 L474.6 1137.7 L471.0 1134.3 L467.4 1130.8 L464.0 1127.2 L460.8 1123.5 L457.6 1119.7 L454.5 1115.9 L451.6 1111.9 L448.8 1107.9 L446.2 1103.9 L443.6 1099.8 L441.3 1095.6 L439.0 1091.3 L436.9 1087.1 L434.9 1082.7 L433.1 1078.3 L431.4 1073.9 L429.9 1069.4 L428.5 1064.9 L427.2 1060.3 L426.1 1055.7 L425.2 1051.1 L424.4 1046.5 L423.7 1041.9 L423.2 1037.2 L422.8 1032.5 L422.6 1027.8 L422.6 1023.1 L422.7 1018.5 L422.9 1013.8 L423.3 1009.1 L423.9 1004.4 L424.6 999.7 L425.4 995.1 L426.4 990.5 L427.6 985.9 L428.9 981.4 L430.3 976.8 L431.9 972.3 L433.6 967.9 L435.5 963.4 L437.5 959.1 L439.6 954.8 L441.9 950.5 L444.3 946.3 L446.8 942.2 L449.5 938.1 L452.3 934.1 L455.2 930.1 L458.3 926.2 L461.5 922.4 L464.7 918.7 L468.1 915.1 L471.7 911.6 L475.3 908.1 L479.0 904.7 L482.9 901.4 L486.8 898.2 L490.9 895.1 L495.0 892.2 L499.2 889.3 L503.5 886.5 L507.9 883.8 L512.4 881.3 L517.0 878.8 L521.7 876.5 L526.4 874.3 L531.1 872.2 L536.0 870.2 L540.8 868.3 L545.8 866.6 L550.8 865.0 L555.9 863.5 L561.0 862.1 L566.1 860.9 L571.3 859.7 L576.5 858.8 L581.7 857.9 L587.0 857.2 L592.3 856.6 L597.6 856.1 L603.0 855.8 L608.3 855.6 L613.6 855.5 L618.9 855.6 L624.2 855.8 L629.5 856.1 L634.9 856.6 L640.2 857.2 L645.4 857.9 L650.7 858.8 L655.9 859.8 L661.0 860.9 L666.2 862.1 L671.3 863.5 L676.3 865.0 L681.4 866.6 L686.3 868.3 L691.2 870.2 L696.1 872.2 L700.8 874.3 L705.5 876.5 L710.2 878.8 L714.8 881.3 L719.3 883.9 L723.7 886.5 L728.0 889.3 L732.2 892.2 L736.3 895.2 L740.4 898.3 L744.3 901.4 L748.2 904.7 L751.9 908.1 L755.6 911.6 L759.1 915.1 L762.5 918.8 L765.8 922.5 L768.9 926.3 L772.0 930.1 L774.9 934.1 L777.7 938.1 L780.4 942.2 L782.9 946.3 L785.4 950.5 L787.6 954.8 L789.8 959.1 L791.8 963.5 L793.6 967.9 L795.4 972.4 L796.9 976.9 L798.4 981.4 L799.7 985.9 L800.8 990.5 L801.8 995.1 L802.6 999.8 L803.3 1004.4 L803.9 1009.1 L804.3 1013.8 L804.5 1018.5 Z" stroke="#f08c00" stroke-width="1.60" fill="none"/><path d="M804.7 1021.9 L804.7 1026.6 L804.5 1031.4 L804.2 1036.1 L803.8 1040.8 L803.2 1045.5 L802.4 1050.2 L801.5 1054.9 L800.5 1059.5 L799.3 1064.1 L797.9 1068.6 L796.4 1073.2 L794.8 1077.7 L793.0 1082.2 L791.0 1086.6 L789.0 1090.9 L786.8 1095.2 L784.4 1099.5 L781.9 1103.7 L779.3 1107.8 L776.5 1111.9 L773.6 1115.9 L770.5 1119.8 L767.4 1123.6 L764.1 1127.4 L760.7 1131.0 L757.2 1134.6 L753.5 1138.1 L749.7 1141.5 L745.9 1144.8 L741.9 1148.1 L737.8 1151.2 L733.6 1154.2 L729.3 1157.1 L725.0 1159.9 L720.5 1162.6 L715.9 1165.2 L711.3 1167.6 L706.6 1170.0 L701.8 1172.2 L696.9 1174.3 L692.0 1176.3 L687.0 1178.2 L681.9 1179.9 L676.8 1181.6 L671.6 1183.1 L666.4 1184.4 L661.2 1185.7 L655.9 1186.8 L650.6 1187.8 L645.3 1188.6 L639.9 1189.3 L634.5 1189.9 L629.1 1190.3 L623.7 1190.7 L618.2 1190.8 L612.8 1190.9 L607.4 1190.8 L602.0 1190.6 L596.6 1190.2 L591.2 1189.7 L585.8 1189.1 L580.5 1188.3 L575.2 1187.5 L569.9 1186.4 L564.7 1185.3 L559.5 1184.0 L554.4 1182.6 L549.3 1181.1 L544.2 1179.4 L539.3 1177.6 L534.3 1175.7 L529.5 1173.7 L524.7 1171.6 L520.0 1169.3 L515.4 1166.9 L510.8 1164.4 L506.4 1161.8 L502.0 1159.1 L497.7 1156.3 L493.5 1153.3 L489.5 1150.3 L485.5 1147.2 L481.6 1144.0 L477.8 1140.6 L474.1 1137.2 L470.6 1133.7 L467.1 1130.1 L463.8 1126.4 L460.6 1122.7 L457.6 1118.9 L454.6 1114.9 L451.8 1110.9 L449.1 1106.9 L446.5 1102.8 L444.0 1098.6 L441.7 1094.4 L439.6 1090.1 L437.6 1085.7 L435.7 1081.3 L433.9 1076.9 L432.3 1072.4 L430.8 1067.9 L429.5 1063.4 L428.3 1058.8 L427.2 1054.2 L426.3 1049.6 L425.6 1044.9 L424.9 1040.2 L424.5 1035.6 L424.1 1030.9 L423.9 1026.2 L423.9 1021.5 L424.0 1016.8 L424.3 1012.2 L424.7 1007.5 L425.2 1002.8 L425.9 998.2 L426.8 993.6 L427.7 989.0 L428.8 984.4 L430.1 979.9 L431.5 975.4 L433.0 970.9 L434.7 966.5 L436.5 962.1 L438.5 957.8 L440.5 953.6 L442.7 949.4 L445.1 945.2 L447.6 941.1 L450.2 937.1 L452.9 933.2 L455.7 929.3 L458.7 925.5 L461.8 921.7 L465.0 918.1 L468.3 914.5 L471.7 911.1 L475.3 907.7 L478.9 904.4 L482.7 901.2 L486.6 898.0 L490.5 895.0 L494.6 892.1 L498.7 889.3 L502.9 886.6 L507.3 884.1 L511.7 881.6 L516.2 879.2 L520.8 876.9 L525.4 874.8 L530.1 872.8 L534.9 870.8 L539.7 869.1 L544.7 867.4 L549.6 865.8 L554.7 864.4 L559.7 863.1 L564.9 861.9 L570.0 860.9 L575.2 859.9 L580.4 859.1 L585.7 858.5 L591.0 857.9 L596.3 857.5 L601.6 857.2 L607.0 857.1 L612.3 857.0 L617.6 857.1 L623.0 857.3 L628.4 857.7 L633.7 858.2 L639.1 858.8 L644.4 859.5 L649.7 860.4 L654.9 861.4 L660.2 862.5 L665.4 863.7 L670.6 865.1 L675.7 866.6 L680.8 868.2 L685.9 869.9 L690.8 871.8 L695.7 873.7 L700.6 875.8 L705.4 878.0 L710.1 880.3 L714.8 882.7 L719.4 885.3 L723.9 887.9 L728.3 890.6 L732.6 893.4 L736.8 896.4 L740.9 899.4 L744.9 902.5 L748.9 905.8 L752.7 909.1 L756.4 912.5 L760.0 916.0 L763.4 919.5 L766.8 923.2 L770.0 926.9 L773.1 930.7 L776.1 934.6 L778.9 938.5 L781.6 942.5 L784.2 946.6 L786.7 950.7 L788.9 954.9 L791.1 959.1 L793.1 963.4 L795.0 967.8 L796.7 972.1 L798.3 976.6 L799.7 981.0 L801.0 985.5 L802.1 990.0 L803.0 994.5 L803.9 999.1 L804.5 1003.7 L805.0 1008.3 L805.4 1012.9 L805.6 1017.5 Z" stroke="#f08c00" stroke-width="1.60" fill="none"/><path d="M475.4 749.4 L476.8 749.9 L478.4 750.7 L480.1 751.7 L481.9 752.9 L483.8 754.3 L485.6 755.6 L487.3 757.0 L488.9 758.4 L490.3 759.7 L491.6 761.1 L492.9 762.5 L494.1 763.9 L495.3 765.4 L496.5 766.9 L497.8 768.5 L499.2 770.0 L500.6 771.6 L502.0 773.1 L503.5 774.6 L505.0 776.2 L506.7 777.9 L508.4 779.8 L510.2 782.0 L512.3 784.7 L514.6 787.7 L517.2 791.2 L520.0 795.1 L522.8 799.2 L525.6 803.2 L528.3 807.1 L530.6 810.7 L532.6 813.8 L534.2 816.5 L535.4 818.8 L536.4 820.8 L537.2 822.6 L537.9 824.3 L538.7 826.0 L539.5 827.9 L540.4 829.9 L541.6 832.2 L542.9 834.6 L544.2 837.1 L545.5 839.6 L546.9 842.2 L548.1 844.6 L549.2 846.9 L550.2 849.0 L550.9 851.0 L551.6 852.8 L552.1 854.5 L552.5 856.1 L552.9 857.7 L553.1 859.1 L553.4 860.6 L553.6 862.0 L553.8 863.3 L554.0 864.7 L554.0 865.9 L554.1 867.1 L554.1 868.3 L554.0 869.5 L553.9 870.6 L553.8 871.7 L553.6 872.9 L553.4 874.0 L553.1 875.1 L552.8 876.2 L552.4 877.3 L551.9 878.4 L551.3 879.4 L550.5 880.3 L549.7 881.2 L548.8 882.1 L547.8 882.8 L546.6 883.6 L545.4 884.4 L544.0 885.2 L542.4 886.0 L540.7 886.9 L538.8 888.0 L536.6 889.1 L534.4 890.2 L531.9 891.4 L529.4 892.6 L526.7 893.8 L524.0 895.0 L521.1 896.1 L518.1 897.3 L515.0 898.4 L511.7 899.5 L508.3 900.6 L504.9 901.6 L501.6 902.7 L498.3 903.7 L495.1 904.6 L492.0 905.6 L488.9 906.5 L485.9 907.3 L482.9 908.2 L480.1 909.0 L477.3 909.7 L474.8 910.5 L472.4 911.3 L470.2 912.4 L468.1 913.8 L466.2 915.3 L464.4 916.6 L462.8 917.6 L461.4 917.8 L460.3 917.1 L459.4 915.1 L458.8 911.7 L458.5 907.0 L458.4 901.3 L458.6 894.9 L458.8 888.2 L459.1 881.5 L459.4 875.1 L459.6 869.1 L459.7 863.5 L459.9 858.0 L460.0 852.6 L460.2 847.3 L460.4 842.3 L460.5 837.8 L460.7 833.8 L460.8 830.5 L460.9 828.1 L461.0 826.6 L461.1 825.8 L461.1 825.3 L461.2 824.8 L461.3 824.0 L461.4 822.4 L461.6 819.9 L461.8 816.4 L462.0 811.8 L462.3 806.7 L462.6 801.1 L462.9 795.5 L463.2 790.1 L463.5 785.3 L463.8 781.1 L464.1 777.7 L464.4 774.8 L464.7 772.3 L465.0 770.2 L465.3 768.2 L465.6 766.4 L465.9 764.7 L466.2 763.0 L466.4 761.4 L466.6 759.8 L466.7 758.3 L466.9 757.0 L467.1 755.8 L467.3 754.6 L467.7 753.6 L468.1 752.6 L468.7 751.8 L469.3 750.9 L470.0 750.2 L470.8 749.6 L471.6 749.1 L472.6 748.8 L473.7 748.7 Z" stroke="#f08c00" stroke-width="1.60" fill="none"/><path d="M476.1 749.7 L477.4 750.3 L479.0 751.1 L480.7 752.2 L482.5 753.4 L484.3 754.8 L486.1 756.2 L487.8 757.6 L489.3 759.0 L490.7 760.4 L492.0 761.7 L493.2 763.2 L494.3 764.6 L495.4 766.1 L496.6 767.6 L497.8 769.2 L499.2 770.8 L500.5 772.3 L501.9 773.8 L503.3 775.4 L504.8 776.9 L506.3 778.6 L508.0 780.6 L509.8 782.8 L511.8 785.4 L514.1 788.4 L516.6 791.9 L519.4 795.8 L522.2 799.8 L525.0 803.8 L527.6 807.7 L529.9 811.2 L531.9 814.3 L533.5 817.0 L534.7 819.2 L535.7 821.1 L536.5 822.9 L537.3 824.6 L538.0 826.3 L538.8 828.1 L539.8 830.1 L541.0 832.3 L542.3 834.7 L543.7 837.1 L545.1 839.6 L546.5 842.1 L547.7 844.5 L548.9 846.7 L549.9 848.8 L550.7 850.7 L551.4 852.5 L552.0 854.2 L552.5 855.7 L552.9 857.2 L553.3 858.6 L553.6 860.1 L553.8 861.4 L554.1 862.8 L554.3 864.0 L554.4 865.3 L554.5 866.4 L554.6 867.6 L554.6 868.7 L554.5 869.9 L554.4 871.0 L554.2 872.1 L554.0 873.3 L553.8 874.4 L553.5 875.5 L553.1 876.5 L552.6 877.6 L552.0 878.6 L551.2 879.6 L550.4 880.5 L549.5 881.3 L548.4 882.1 L547.3 882.9 L546.0 883.7 L544.6 884.5 L542.9 885.4 L541.2 886.4 L539.2 887.5 L537.0 888.6 L534.7 889.8 L532.2 891.0 L529.6 892.3 L526.9 893.5 L524.1 894.7 L521.2 895.9 L518.1 897.1 L514.9 898.2 L511.5 899.4 L508.1 900.5 L504.7 901.6 L501.3 902.7 L497.9 903.8 L494.7 904.8 L491.6 905.8 L488.4 906.7 L485.4 907.6 L482.3 908.5 L479.4 909.4 L476.7 910.2 L474.1 911.0 L471.7 911.8 L469.5 912.9 L467.4 914.3 L465.5 915.9 L463.7 917.3 L462.1 918.2 L460.8 918.5 L459.6 917.8 L458.8 915.8 L458.2 912.4 L457.9 907.8 L457.9 902.1 L458.1 895.7 L458.4 889.0 L458.7 882.3 L459.0 875.8 L459.3 869.9 L459.5 864.3 L459.7 858.7 L459.9 853.3 L460.1 848.0 L460.3 843.0 L460.6 838.4 L460.8 834.4 L461.0 831.1 L461.1 828.7 L461.3 827.1 L461.4 826.3 L461.5 825.8 L461.6 825.2 L461.8 824.3 L461.9 822.8 L462.1 820.2 L462.4 816.6 L462.7 812.0 L462.9 806.8 L463.3 801.2 L463.6 795.5 L463.9 790.1 L464.2 785.2 L464.5 781.0 L464.8 777.5 L465.1 774.6 L465.4 772.1 L465.7 769.9 L465.9 767.9 L466.2 766.1 L466.5 764.3 L466.7 762.6 L466.9 760.9 L467.0 759.3 L467.1 757.8 L467.2 756.4 L467.4 755.1 L467.6 754.0 L467.9 752.9 L468.3 751.9 L468.7 751.0 L469.3 750.2 L469.9 749.4 L470.6 748.8 L471.4 748.3 L472.3 748.0 L473.4 748.0 Z" stroke="#f08c00" stroke-width="1.60" fill="none"/><path d="M784.9 756.5 L785.9 756.7 L786.8 757.0 L787.6 757.4 L788.4 758.0 L789.2 758.8 L789.9 759.7 L790.5 760.9 L791.0 762.3 L791.4 764.0 L791.7 766.1 L791.9 768.3 L792.1 770.8 L792.2 773.3 L792.2 775.9 L792.3 778.5 L792.3 780.9 L792.4 783.3 L792.4 785.5 L792.4 787.8 L792.4 790.1 L792.3 792.4 L792.2 794.9 L792.0 797.5 L791.8 800.4 L791.4 803.6 L791.0 807.0 L790.5 810.7 L790.0 814.4 L789.4 818.2 L788.8 821.9 L788.2 825.4 L787.7 828.7 L787.2 831.7 L786.7 834.6 L786.2 837.4 L785.8 840.0 L785.3 842.6 L784.8 845.1 L784.2 847.5 L783.6 849.9 L782.9 852.3 L782.2 854.5 L781.4 856.7 L780.7 858.8 L779.8 860.9 L779.0 863.1 L778.1 865.4 L777.2 867.7 L776.2 870.3 L775.1 873.0 L774.0 875.9 L772.9 878.7 L771.8 881.6 L770.7 884.2 L769.6 886.6 L768.5 888.8 L767.5 890.6 L766.5 892.2 L765.6 893.6 L764.6 894.9 L763.7 895.9 L762.7 896.9 L761.6 897.8 L760.5 898.7 L759.2 899.5 L757.9 900.2 L756.5 900.8 L755.1 901.3 L753.7 901.7 L752.3 902.0 L751.0 902.1 L749.7 902.1 L748.4 902.0 L747.2 901.7 L746.1 901.3 L745.0 900.8 L743.8 900.1 L742.7 899.4 L741.5 898.7 L740.3 897.9 L739.0 897.0 L737.8 896.0 L736.4 894.9 L735.1 893.8 L733.8 892.7 L732.4 891.6 L731.0 890.5 L729.6 889.5 L728.2 888.5 L726.8 887.6 L725.4 886.7 L724.0 885.9 L722.6 885.0 L721.0 884.2 L719.3 883.3 L717.5 882.4 L715.6 881.5 L713.4 880.6 L711.2 879.6 L708.8 878.6 L706.5 877.7 L704.2 876.7 L702.1 875.8 L700.1 875.0 L698.4 874.2 L696.8 873.5 L695.4 872.9 L694.0 872.2 L692.6 871.6 L691.1 870.9 L689.3 870.2 L687.2 869.4 L684.7 868.5 L681.7 867.6 L678.3 866.7 L674.9 865.7 L671.7 864.7 L668.9 863.7 L666.7 862.7 L665.4 861.8 L664.9 860.8 L665.2 859.9 L666.1 859.1 L667.4 858.2 L669.0 857.2 L670.9 856.1 L672.8 854.8 L674.7 853.3 L676.7 851.5 L678.9 849.5 L681.3 847.3 L683.8 845.0 L686.3 842.6 L688.9 840.1 L691.5 837.7 L693.9 835.3 L696.4 833.0 L698.8 830.7 L701.2 828.3 L703.6 826.0 L706.0 823.6 L708.4 821.2 L710.8 818.8 L713.2 816.4 L715.6 813.9 L718.1 811.4 L720.5 808.8 L723.0 806.2 L725.4 803.6 L727.8 801.1 L730.1 798.7 L732.4 796.4 L734.6 794.2 L736.9 792.1 L739.1 790.1 L741.2 788.2 L743.3 786.4 L745.3 784.6 L747.2 782.9 L749.1 781.3 L750.8 779.8 L752.3 778.4 L753.8 777.1 L755.3 775.8 L756.7 774.6 L758.1 773.4 L759.6 772.1 L761.2 770.8 L762.9 769.4 L764.7 767.9 L766.5 766.4 L768.4 764.9 L770.3 763.4 L772.1 762.1 L773.8 760.9 L775.4 759.8 L776.9 758.9 L778.2 758.1 L779.5 757.5 L780.8 756.9 L782.0 756.5 L783.1 756.3 L784.2 756.1 Z" stroke="#f08c00" stroke-width="1.60" fill="none"/><path d="M786.0 756.8 L787.0 757.1 L787.9 757.4 L788.8 757.9 L789.7 758.5 L790.5 759.3 L791.1 760.2 L791.7 761.4 L792.3 762.9 L792.6 764.6 L792.9 766.7 L793.1 769.0 L793.3 771.4 L793.3 774.0 L793.3 776.6 L793.3 779.1 L793.3 781.6 L793.3 784.0 L793.3 786.2 L793.2 788.5 L793.1 790.8 L792.9 793.1 L792.7 795.6 L792.5 798.2 L792.1 801.1 L791.7 804.3 L791.1 807.7 L790.5 811.3 L789.9 815.0 L789.2 818.8 L788.5 822.4 L787.9 825.9 L787.2 829.2 L786.7 832.2 L786.1 835.1 L785.5 837.8 L785.0 840.4 L784.4 842.9 L783.8 845.4 L783.2 847.8 L782.5 850.2 L781.8 852.5 L781.0 854.7 L780.2 856.8 L779.4 858.9 L778.6 861.0 L777.7 863.1 L776.8 865.3 L775.9 867.6 L774.9 870.2 L773.9 872.9 L772.8 875.7 L771.7 878.5 L770.6 881.3 L769.5 883.9 L768.5 886.3 L767.5 888.4 L766.5 890.2 L765.6 891.8 L764.8 893.1 L763.9 894.3 L763.0 895.4 L762.1 896.3 L761.2 897.2 L760.1 898.0 L759.0 898.8 L757.8 899.5 L756.5 900.1 L755.2 900.6 L753.9 901.0 L752.6 901.3 L751.3 901.4 L750.1 901.4 L749.0 901.3 L747.9 901.0 L746.8 900.6 L745.8 900.1 L744.7 899.4 L743.6 898.8 L742.5 898.0 L741.4 897.2 L740.2 896.4 L738.9 895.4 L737.7 894.4 L736.4 893.3 L735.0 892.2 L733.7 891.1 L732.3 890.0 L730.9 889.0 L729.5 888.1 L728.1 887.2 L726.7 886.4 L725.2 885.6 L723.7 884.8 L722.1 884.0 L720.4 883.1 L718.5 882.3 L716.5 881.4 L714.3 880.5 L712.0 879.6 L709.6 878.6 L707.1 877.7 L704.8 876.8 L702.5 876.0 L700.5 875.2 L698.6 874.5 L697.0 873.8 L695.4 873.1 L694.0 872.5 L692.5 871.9 L690.8 871.3 L689.0 870.6 L686.8 869.8 L684.1 869.0 L681.0 868.2 L677.6 867.3 L674.1 866.3 L670.8 865.3 L667.9 864.4 L665.7 863.4 L664.3 862.4 L663.8 861.5 L664.0 860.6 L664.9 859.8 L666.1 858.9 L667.8 857.9 L669.6 856.8 L671.5 855.5 L673.4 854.0 L675.5 852.2 L677.7 850.2 L680.0 848.0 L682.6 845.6 L685.2 843.2 L687.8 840.8 L690.4 838.3 L692.9 835.9 L695.4 833.6 L697.9 831.2 L700.4 828.9 L702.9 826.5 L705.4 824.1 L707.9 821.7 L710.4 819.3 L712.9 816.8 L715.4 814.3 L717.9 811.7 L720.5 809.0 L723.0 806.4 L725.5 803.8 L728.0 801.2 L730.5 798.8 L732.9 796.5 L735.2 794.2 L737.5 792.1 L739.8 790.1 L742.0 788.1 L744.2 786.3 L746.2 784.5 L748.2 782.7 L750.1 781.1 L751.9 779.5 L753.5 778.1 L755.0 776.7 L756.5 775.4 L757.9 774.2 L759.4 772.9 L760.9 771.6 L762.5 770.3 L764.1 768.9 L765.9 767.4 L767.8 765.8 L769.6 764.3 L771.4 762.8 L773.2 761.4 L774.8 760.2 L776.4 759.1 L777.8 758.2 L779.1 757.4 L780.3 756.8 L781.5 756.2 L782.6 755.8 L783.6 755.5 L784.6 755.4 Z" stroke="#f08c00" stroke-width="1.60" fill="none"/><path d="M577.0 973.6 C577.0 976.4 576.5 979.4 575.6 982.0 C574.6 984.6 573.1 987.2 571.4 989.2 C569.7 991.1 567.5 992.9 565.3 993.9 C563.0 995.0 560.4 995.6 558.0 995.6 C555.6 995.6 553.0 995.0 550.7 993.9 C548.5 992.9 546.3 991.1 544.6 989.2 C542.9 987.2 541.4 984.6 540.4 982.0 C539.5 979.4 539.0 976.4 539.0 973.6 C539.0 970.8 539.5 967.8 540.4 965.2 C541.4 962.6 542.9 960.0 544.6 958.0 C546.3 956.1 548.5 954.3 550.7 953.3 C553.0 952.2 555.6 951.6 558.0 951.6 C560.4 951.6 563.0 952.2 565.3 953.3 C567.5 954.3 569.7 956.1 571.4 958.0 C573.1 960.0 574.6 962.6 575.6 965.2 C576.5 967.8 577.0 970.8 577.0 973.6 Z" fill="#b2f2bb" stroke="none"/><path d="M576.9 973.5 C576.8 976.3 576.3 979.4 575.3 982.0 C574.4 984.6 572.9 987.2 571.2 989.2 C569.4 991.2 567.2 993.0 565.0 994.0 C562.7 995.1 560.1 995.8 557.7 995.8 C555.3 995.8 552.7 995.2 550.4 994.1 C548.2 993.1 546.0 991.4 544.3 989.4 C542.6 987.4 541.1 984.9 540.2 982.3 C539.3 979.7 538.8 976.7 538.8 973.9 C538.9 971.1 539.4 968.1 540.4 965.5 C541.3 962.9 542.8 960.3 544.6 958.4 C546.3 956.4 548.6 954.7 550.8 953.6 C553.1 952.5 555.7 951.9 558.2 951.9 C560.6 951.9 563.3 952.4 565.5 953.5 C567.8 954.6 570.0 956.3 571.7 958.2 C573.4 960.2 575.0 962.8 575.9 965.3 C576.7 967.9 576.9 970.8 576.9 973.5 Z" stroke="#2f9e44" stroke-width="1.90" fill="none"/><path d="M576.8 973.6 C576.6 976.2 576.1 979.2 575.1 981.8 C574.1 984.3 572.6 986.8 570.8 988.7 C569.0 990.6 566.7 992.3 564.5 993.3 C562.2 994.3 559.5 994.9 557.1 994.8 C554.7 994.8 552.1 994.1 549.8 993.1 C547.6 992.0 545.4 990.2 543.8 988.3 C542.1 986.3 540.7 983.7 539.8 981.1 C538.9 978.6 538.5 975.6 538.6 972.8 C538.7 970.0 539.3 967.1 540.3 964.5 C541.3 962.0 542.9 959.5 544.7 957.6 C546.5 955.6 548.8 954.0 551.1 953.0 C553.4 952.0 556.1 951.5 558.6 951.5 C561.1 951.6 563.8 952.3 566.1 953.4 C568.3 954.6 570.6 956.4 572.3 958.4 C574.1 960.5 575.7 963.2 576.4 965.7 C577.2 968.3 577.1 970.9 576.8 973.6 Z" stroke="#2f9e44" stroke-width="1.90" fill="none"/><path d="M692.7 972.5 C692.7 975.3 692.2 978.4 691.2 981.0 C690.2 983.6 688.7 986.2 686.9 988.2 C685.2 990.2 682.9 991.9 680.5 993.0 C678.2 994.1 675.5 994.7 673.0 994.7 C670.5 994.7 667.8 994.1 665.5 993.0 C663.1 991.9 660.8 990.2 659.1 988.2 C657.3 986.2 655.8 983.6 654.8 981.0 C653.8 978.4 653.3 975.3 653.3 972.5 C653.3 969.7 653.8 966.6 654.8 964.0 C655.8 961.4 657.3 958.8 659.1 956.8 C660.8 954.8 663.1 953.1 665.5 952.0 C667.8 950.9 670.5 950.3 673.0 950.3 C675.5 950.3 678.2 950.9 680.5 952.0 C682.9 953.1 685.2 954.8 686.9 956.8 C688.7 958.8 690.2 961.4 691.2 964.0 C692.2 966.6 692.7 969.7 692.7 972.5 Z" fill="#b2f2bb" stroke="none"/><path d="M692.7 972.5 C692.6 975.2 692.1 978.3 691.1 980.9 C690.1 983.4 688.5 986.0 686.7 988.0 C684.9 989.9 682.6 991.7 680.3 992.7 C677.9 993.8 675.2 994.4 672.7 994.4 C670.2 994.4 667.5 993.8 665.1 992.7 C662.8 991.6 660.5 989.9 658.8 987.9 C657.0 986.0 655.5 983.4 654.6 980.8 C653.6 978.2 653.1 975.2 653.1 972.4 C653.2 969.6 653.7 966.6 654.7 964.0 C655.7 961.4 657.3 958.9 659.1 956.9 C660.9 954.9 663.2 953.2 665.6 952.2 C667.9 951.1 670.7 950.6 673.2 950.6 C675.8 950.6 678.5 951.2 680.8 952.3 C683.2 953.4 685.5 955.1 687.2 957.1 C689.0 959.1 690.6 961.7 691.5 964.3 C692.4 966.8 692.8 969.7 692.7 972.5 Z" stroke="#2f9e44" stroke-width="1.90" fill="none"/><path d="M693.5 971.9 C693.7 974.7 693.0 977.9 692.1 980.6 C691.1 983.3 689.6 985.9 687.8 988.0 C686.1 990.1 683.8 991.9 681.4 993.0 C679.1 994.2 676.4 994.9 673.9 994.9 C671.3 995.0 668.6 994.5 666.3 993.5 C663.9 992.4 661.6 990.8 659.8 988.8 C658.0 986.9 656.4 984.3 655.4 981.8 C654.4 979.2 653.8 976.2 653.8 973.4 C653.7 970.5 654.2 967.5 655.1 964.9 C656.0 962.3 657.5 959.7 659.2 957.7 C660.9 955.7 663.2 953.9 665.4 952.8 C667.7 951.7 670.3 951.1 672.8 951.0 C675.3 951.0 677.9 951.5 680.2 952.6 C682.4 953.6 684.7 955.3 686.4 957.2 C688.1 959.1 689.4 961.8 690.6 964.2 C691.7 966.7 693.2 969.2 693.5 971.9 Z" stroke="#2f9e44" stroke-width="1.90" fill="none"/><path d="M590.0 1024.6 C593.0 1021.3 607.2 1023.9 616.0 1024.0 C624.8 1024.1 638.3 1023.6 642.5 1025.3 C646.7 1027.0 643.4 1029.2 641.0 1034.0 C638.6 1038.8 632.3 1047.8 628.0 1054.0 C623.7 1060.2 618.3 1069.3 615.0 1071.0 C611.7 1072.7 610.8 1068.5 608.0 1064.0 C605.2 1059.5 601.0 1050.6 598.0 1044.0 C595.0 1037.4 587.0 1027.9 590.0 1024.6 Z" fill="#ffc9c9" stroke="none"/><path d="M589.7 1024.8 C592.7 1021.5 607.0 1024.0 615.7 1024.1 C624.4 1024.2 638.0 1023.7 642.2 1025.3 C646.4 1027.0 643.1 1029.2 640.7 1033.9 C638.3 1038.7 632.0 1047.7 627.7 1053.9 C623.4 1060.0 618.1 1069.1 614.7 1070.8 C611.4 1072.4 610.6 1068.2 607.8 1063.7 C605.0 1059.2 600.8 1050.2 597.8 1043.7 C594.8 1037.2 586.7 1028.1 589.7 1024.8 Z" stroke="#e03131" stroke-width="1.60" fill="none"/><path d="M589.2 1025.5 C592.1 1022.2 606.4 1024.8 615.1 1024.9 C623.9 1025.0 637.4 1024.5 641.6 1026.2 C645.8 1027.9 642.5 1030.1 640.1 1034.9 C637.7 1039.6 631.5 1048.7 627.2 1054.8 C622.9 1060.9 617.6 1070.1 614.3 1071.7 C611.0 1073.4 610.2 1069.2 607.4 1064.6 C604.6 1060.1 600.6 1051.0 597.5 1044.5 C594.5 1038.0 586.3 1028.7 589.2 1025.5 Z" stroke="#e03131" stroke-width="1.60" fill="none"/><path d="M502.6 1017.0 C508.5 1018.1 526.3 1021.3 538.2 1023.5 C550.1 1025.7 567.8 1029.0 573.8 1030.1" stroke="#1e1e1e" stroke-width="2.00" fill="none"/><path d="M502.6 1017.5 C508.5 1018.6 526.1 1022.0 537.9 1024.2 C549.7 1026.4 567.4 1029.7 573.3 1030.8" stroke="#1e1e1e" stroke-width="2.00" fill="none"/><path d="M501.5 1052.5 C507.6 1051.7 525.9 1049.1 538.0 1047.5 C550.1 1045.9 568.2 1043.5 574.2 1042.7" stroke="#1e1e1e" stroke-width="2.00" fill="none"/><path d="M501.6 1051.8 C507.6 1051.0 525.7 1048.5 537.7 1046.9 C549.7 1045.3 567.7 1042.8 573.7 1042.0" stroke="#1e1e1e" stroke-width="2.00" fill="none"/><path d="M662.0 1029.6 C667.6 1028.0 684.2 1023.2 695.4 1019.9 C706.5 1016.6 723.4 1011.7 729.0 1010.0" stroke="#1e1e1e" stroke-width="2.00" fill="none"/><path d="M661.6 1029.8 C667.2 1028.1 683.9 1023.1 695.1 1019.8 C706.2 1016.4 723.0 1011.4 728.6 1009.8" stroke="#1e1e1e" stroke-width="2.00" fill="none"/><path d="M661.5 1047.6 C667.5 1047.8 685.5 1048.3 697.6 1048.6 C709.7 1048.9 728.0 1049.3 734.0 1049.4" stroke="#1e1e1e" stroke-width="2.00" fill="none"/><path d="M662.1 1048.3 C668.2 1048.4 686.4 1048.8 698.5 1049.1 C710.7 1049.4 728.8 1049.8 734.9 1049.9" stroke="#1e1e1e" stroke-width="2.00" fill="none"/><path d="M568.2 1115.3 C573.0 1117.2 589.7 1124.1 596.9 1126.7 C604.2 1129.3 606.3 1130.7 611.7 1130.9 C617.1 1131.1 620.2 1131.1 629.2 1128.1 C638.2 1125.0 659.6 1115.3 665.7 1112.7" stroke="#f08c00" stroke-width="2.00" fill="none"/><path d="M568.5 1114.7 C573.3 1116.7 590.1 1123.7 597.5 1126.4 C604.8 1129.1 607.0 1130.4 612.4 1130.7 C617.8 1131.0 621.0 1131.0 630.1 1128.0 C639.1 1125.1 660.5 1115.4 666.6 1112.9" stroke="#f08c00" stroke-width="2.00" fill="none"/><path d="M825.3 965.3 L829.3 962.2 L834.5 958.5 L840.1 954.5 L845.8 950.5 L851.5 946.5 L857.0 942.5 L862.1 939.0 L866.8 935.7 L871.1 932.7 L875.0 930.1 L878.4 927.7 L881.5 925.6 L884.3 923.7 L886.9 922.0 L889.3 920.4 L891.5 918.9 L893.5 917.6 L895.4 916.4 L897.2 915.2 L898.8 914.2 L900.5 913.1 L902.1 912.0 L903.8 910.8 L905.6 909.5 L907.5 908.2 L909.5 906.7 L911.6 905.1 L913.7 903.4 L915.9 901.8 L918.0 900.1 L920.1 898.5 L922.1 897.0 L924.0 895.5 L925.9 894.1 L927.7 892.7 L929.5 891.3 L931.2 890.0 L933.0 888.6 L934.7 887.1 L936.5 885.6 L938.2 884.0 L940.0 882.4 L941.8 880.7 L943.6 878.9 L945.3 877.2 L947.0 875.4 L948.6 873.7 L950.2 872.1 L951.6 870.5 L952.9 869.0 L954.2 867.5 L955.4 866.1 L956.5 864.6 L957.7 863.1 L958.8 861.6 L959.8 860.1 L960.9 858.5 L961.9 856.8 L963.0 855.1 L963.9 853.3 L964.9 851.6 L965.8 849.8 L966.6 848.1 L967.4 846.4 L968.1 844.7 L968.8 843.0 L969.4 841.3 L969.9 839.7 L970.4 838.1 L970.8 836.4 L971.2 834.8 L971.5 833.1 L971.8 831.5 L972.0 829.8 L972.1 828.1 L972.3 826.4 L972.4 824.6 L972.4 822.8 L972.4 820.9 L972.4 818.9 L972.4 816.8 L972.3 814.7 L972.1 812.4 L972.0 810.1 L971.8 807.6 L971.5 805.0 L971.2 802.2 L970.8 799.3 L970.4 796.3 L969.9 793.1 L969.3 789.8 L968.7 786.3 L968.1 782.8 L967.4 779.1 L966.6 775.5 L965.9 771.7 L965.1 767.9 L964.2 764.1 L963.3 760.2 L962.5 756.3 L961.6 752.5 L960.8 748.6 L960.0 744.8 L959.2 741.1 L958.5 737.5 L957.9 733.9 L957.4 730.4 L956.9 727.1 L956.4 723.8 L956.1 720.7 L955.8 717.8 L955.5 715.1 L955.4 712.7 L955.3 710.4 L955.3 708.3 L955.3 706.3 L955.4 704.4 L955.5 702.6 L955.7 700.7 L955.8 698.9 L956.0 697.0 L956.2 695.1 L956.4 693.2 L956.6 691.4 L956.9 689.5 L957.2 687.7 L957.6 686.0 L958.0 684.4 L958.4 683.0 L958.9 681.6 L959.4 680.2 L960.0 679.0 L960.6 677.7 L961.3 676.5 L962.1 675.2 L963.0 673.9 L964.0 672.5 L965.1 671.1 L966.3 669.6 L967.6 668.2 L969.0 666.7 L970.6 665.3 L972.2 663.9 L973.9 662.5 L975.8 661.2 L977.8 660.0 L980.0 658.8 L982.2 657.6 L984.6 656.5 L987.0 655.4 L989.6 654.3 L992.3 653.1 L995.0 652.0 L997.9 650.8 L1000.9 649.7 L1003.9 648.5 L1007.1 647.4 L1010.5 646.2 L1014.0 645.1 L1017.6 643.9 L1021.4 642.8 L1025.3 641.7 L1029.4 640.7 L1033.5 639.6 L1037.7 638.6 L1042.0 637.6 L1046.3 636.6 L1050.5 635.6 L1054.8 634.7 L1059.0 633.8 L1063.2 632.9 L1067.5 632.0 L1071.7 631.2 L1075.9 630.4 L1080.1 629.6 L1084.3 628.9 L1088.5 628.2 L1092.7 627.6 L1096.9 626.9 L1101.1 626.3 L1105.2 625.8 L1109.3 625.3 L1113.4 624.8 L1117.4 624.3 L1121.3 623.9 L1125.2 623.5 L1129.1 623.2 L1133.0 622.9 L1137.1 622.7 L1141.4 622.5 L1146.0 622.3 L1151.1 622.3 L1156.5 622.2 L1162.4 622.2 L1168.5 622.3 L1174.7 622.4 L1181.0 622.6 L1187.0 622.8 L1192.8 623.0 L1198.2 623.2 L1203.2 623.4 L1207.8 623.7 L1212.0 623.9 L1216.0 624.2 L1219.8 624.6 L1223.5 625.0 L1227.2 625.4 L1231.0 625.9 L1234.8 626.4 L1238.7 627.1 L1242.6 627.7 L1246.5 628.5 L1250.3 629.3 L1254.2 630.1 L1257.9 631.1 L1261.6 632.1 L1265.2 633.1 L1268.7 634.3 L1272.1 635.5 L1275.5 636.7 L1278.6 638.0 L1281.7 639.4 L1284.5 640.8 L1287.2 642.3 L1289.7 643.7 L1292.0 645.2 L1294.1 646.8 L1296.1 648.4 L1298.0 650.1 L1299.8 652.0 L1301.6 653.9 L1303.3 656.0 L1305.0 658.2 L1306.7 660.5 L1308.3 663.0 L1309.9 665.6 L1311.4 668.2 L1312.9 670.8 L1314.4 673.5 L1315.9 676.2 L1317.3 678.9 L1318.7 681.5 L1320.0 684.2 L1321.3 686.9 L1322.6 689.6 L1323.9 692.4 L1325.1 695.2 L1326.3 698.1 L1327.4 701.1 L1328.6 704.1 L1329.7 707.2 L1330.7 710.4 L1331.7 713.7 L1332.7 717.0 L1333.7 720.4 L1334.6 723.9 L1335.5 727.4 L1336.4 730.9 L1337.2 734.6 L1338.0 738.4 L1338.8 742.4 L1339.6 746.5 L1340.3 750.9 L1341.0 755.6 L1341.6 760.5 L1342.3 765.7 L1342.9 771.1 L1343.5 776.7 L1344.0 782.4 L1344.5 788.1 L1344.9 793.9 L1345.3 799.8 L1345.6 805.6 L1345.9 811.4 L1346.1 817.1 L1346.3 822.7 L1346.4 828.1 L1346.4 833.2 L1346.4 837.9 L1346.4 842.2 L1346.3 846.0 L1346.1 849.3 L1345.9 852.4 L1345.6 855.2 L1345.4 857.9 L1345.0 860.6 L1344.7 863.6 L1344.3 866.8 L1343.9 870.3 L1343.4 874.1 L1342.9 878.1 L1342.4 882.2 L1341.8 886.3 L1341.2 890.3 L1340.6 894.2 L1339.9 897.9 L1339.1 901.3 L1338.3 904.4 L1337.4 907.4 L1336.4 910.2 L1335.4 912.9 L1334.4 915.6 L1333.3 918.2 L1332.2 920.7 L1331.0 923.3 L1329.8 925.9 L1328.5 928.4 L1327.1 931.0 L1325.7 933.4 L1324.2 935.8 L1322.6 938.0 L1321.0 940.2 L1319.2 942.2 L1317.4 944.1 L1315.4 946.0 L1313.4 947.7 L1311.3 949.3 L1309.1 950.8 L1306.8 952.1 L1304.4 953.4 L1302.0 954.6 L1299.4 955.6 L1296.8 956.6 L1294.1 957.5 L1291.3 958.2 L1288.4 958.9 L1285.4 959.6 L1282.3 960.1 L1279.2 960.6 L1276.0 961.1 L1272.6 961.4 L1269.2 961.8 L1265.7 962.0 L1262.1 962.2 L1258.4 962.3 L1254.6 962.3 L1250.6 962.3 L1246.5 962.1 L1242.4 962.0 L1238.2 961.7 L1234.1 961.4 L1230.2 961.1 L1226.4 960.7 L1223.0 960.3 L1219.8 959.9 L1216.9 959.5 L1214.1 959.0 L1211.4 958.5 L1208.6 957.9 L1205.5 957.3 L1202.1 956.6 L1198.2 955.7 L1193.8 954.8 L1189.0 953.8 L1183.7 952.7 L1178.1 951.5 L1172.2 950.3 L1166.1 949.1 L1159.9 947.8 L1153.5 946.6 L1147.1 945.3 L1140.5 944.1 L1133.9 942.8 L1127.2 941.6 L1120.3 940.3 L1113.4 939.1 L1106.5 937.8 L1099.4 936.4 L1092.2 935.1 L1085.0 933.7 L1077.8 932.3 L1070.7 931.0 L1063.7 929.7 L1057.0 928.5 L1050.6 927.4 L1044.7 926.5 L1039.3 925.7 L1034.2 925.1 L1029.6 924.6 L1025.1 924.3 L1020.8 924.0 L1016.3 923.9 L1011.7 923.9 L1006.9 923.9 L1001.7 924.0 L996.3 924.3 L990.7 924.6 L984.9 925.0 L979.0 925.5 L973.0 926.0 L967.0 926.7 L961.0 927.5 L955.1 928.4 L949.2 929.3 L943.3 930.4 L937.4 931.5 L931.5 932.8 L925.6 934.1 L919.7 935.6 L913.8 937.1 L907.9 938.8 L901.9 940.5 L896.0 942.4 L890.1 944.3 L884.2 946.2 L878.4 948.2 L872.5 950.1 L866.7 952.1 L860.9 954.0 L855.1 955.9 L849.3 957.8 L843.8 959.6 L838.6 961.3 L833.6 962.9 L829.1 964.4 L825.3 965.3" stroke="#1b1b1b" stroke-width="1.90" fill="none"/><path d="M825.3 965.3 L828.5 962.3 L833.7 958.6 L839.3 954.6 L845.0 950.5 L850.7 946.5 L856.3 942.5 L861.4 938.9 L866.1 935.7 L870.4 932.6 L874.3 930.0 L877.7 927.6 L880.8 925.5 L883.7 923.6 L886.3 921.8 L888.7 920.2 L890.9 918.7 L893.0 917.4 L894.9 916.1 L896.7 915.0 L898.4 913.9 L900.0 912.8 L901.7 911.7 L903.4 910.5 L905.2 909.2 L907.2 907.8 L909.2 906.3 L911.3 904.7 L913.5 903.0 L915.7 901.3 L917.8 899.7 L919.9 898.0 L922.0 896.5 L923.9 895.0 L925.8 893.5 L927.7 892.1 L929.5 890.8 L931.3 889.4 L933.0 888.0 L934.8 886.5 L936.6 885.0 L938.4 883.4 L940.2 881.7 L942.0 880.0 L943.8 878.3 L945.6 876.5 L947.3 874.7 L949.0 873.0 L950.5 871.4 L952.0 869.8 L953.3 868.3 L954.6 866.8 L955.9 865.3 L957.0 863.9 L958.2 862.4 L959.3 860.9 L960.4 859.3 L961.5 857.7 L962.5 856.0 L963.6 854.3 L964.6 852.6 L965.6 850.8 L966.5 849.1 L967.4 847.3 L968.2 845.6 L968.9 843.9 L969.5 842.2 L970.1 840.6 L970.7 838.9 L971.2 837.3 L971.6 835.6 L972.0 834.0 L972.3 832.3 L972.6 830.7 L972.8 829.0 L973.0 827.3 L973.1 825.6 L973.2 823.9 L973.3 822.0 L973.3 820.1 L973.3 818.2 L973.2 816.1 L973.1 813.9 L973.0 811.7 L972.8 809.3 L972.6 806.9 L972.3 804.3 L972.0 801.6 L971.6 798.7 L971.2 795.6 L970.7 792.4 L970.1 789.1 L969.5 785.7 L968.9 782.1 L968.2 778.5 L967.4 774.9 L966.6 771.1 L965.8 767.3 L964.9 763.5 L964.1 759.7 L963.2 755.8 L962.3 751.9 L961.4 748.1 L960.6 744.4 L959.8 740.7 L959.1 737.0 L958.5 733.5 L957.9 730.0 L957.4 726.7 L956.9 723.4 L956.5 720.4 L956.2 717.5 L956.0 714.8 L955.8 712.4 L955.7 710.1 L955.6 708.0 L955.6 706.0 L955.7 704.2 L955.8 702.4 L955.9 700.6 L956.0 698.7 L956.2 696.9 L956.3 695.0 L956.5 693.1 L956.7 691.3 L957.0 689.5 L957.2 687.7 L957.5 686.0 L957.9 684.4 L958.3 683.0 L958.7 681.6 L959.2 680.3 L959.8 679.0 L960.4 677.8 L961.1 676.6 L961.9 675.3 L962.8 674.0 L963.7 672.7 L964.8 671.3 L966.0 669.8 L967.2 668.4 L968.6 667.0 L970.1 665.5 L971.7 664.2 L973.4 662.8 L975.3 661.6 L977.3 660.3 L979.4 659.2 L981.6 658.0 L983.9 656.9 L986.4 655.8 L988.9 654.7 L991.6 653.6 L994.3 652.4 L997.2 651.3 L1000.1 650.2 L1003.2 649.0 L1006.4 647.9 L1009.7 646.7 L1013.2 645.6 L1016.8 644.5 L1020.6 643.4 L1024.5 642.3 L1028.5 641.3 L1032.7 640.2 L1036.9 639.2 L1041.2 638.2 L1045.4 637.2 L1049.7 636.3 L1053.9 635.3 L1058.2 634.4 L1062.4 633.6 L1066.6 632.7 L1070.8 631.9 L1075.0 631.1 L1079.2 630.4 L1083.4 629.7 L1087.6 629.0 L1091.8 628.3 L1096.0 627.7 L1100.2 627.1 L1104.4 626.5 L1108.5 626.0 L1112.6 625.5 L1116.6 625.1 L1120.6 624.7 L1124.4 624.3 L1128.3 624.0 L1132.3 623.7 L1136.4 623.5 L1140.7 623.3 L1145.4 623.1 L1150.4 623.0 L1155.9 623.0 L1161.7 623.0 L1167.9 623.1 L1174.1 623.2 L1180.4 623.4 L1186.5 623.5 L1192.3 623.7 L1197.7 623.9 L1202.7 624.2 L1207.3 624.4 L1211.6 624.7 L1215.6 625.0 L1219.4 625.3 L1223.2 625.7 L1226.9 626.1 L1230.7 626.6 L1234.6 627.1 L1238.5 627.7 L1242.4 628.4 L1246.3 629.1 L1250.2 629.9 L1254.1 630.8 L1257.9 631.7 L1261.6 632.7 L1265.2 633.7 L1268.8 634.9 L1272.2 636.0 L1275.6 637.3 L1278.8 638.6 L1281.8 639.9 L1284.7 641.3 L1287.4 642.8 L1289.9 644.2 L1292.3 645.7 L1294.4 647.3 L1296.5 648.9 L1298.4 650.6 L1300.2 652.4 L1302.0 654.3 L1303.8 656.3 L1305.5 658.5 L1307.2 660.9 L1308.8 663.3 L1310.4 665.8 L1312.0 668.5 L1313.5 671.1 L1315.0 673.8 L1316.5 676.4 L1317.9 679.1 L1319.3 681.7 L1320.7 684.3 L1322.0 687.0 L1323.3 689.7 L1324.6 692.5 L1325.8 695.3 L1327.0 698.2 L1328.2 701.1 L1329.3 704.1 L1330.5 707.2 L1331.5 710.4 L1332.6 713.6 L1333.6 717.0 L1334.6 720.3 L1335.5 723.8 L1336.4 727.2 L1337.3 730.8 L1338.1 734.5 L1338.9 738.2 L1339.7 742.2 L1340.4 746.3 L1341.1 750.7 L1341.8 755.3 L1342.5 760.2 L1343.1 765.4 L1343.7 770.8 L1344.3 776.3 L1344.8 782.0 L1345.3 787.8 L1345.8 793.6 L1346.1 799.4 L1346.4 805.1 L1346.7 810.9 L1346.9 816.6 L1347.0 822.2 L1347.1 827.6 L1347.2 832.7 L1347.2 837.4 L1347.1 841.6 L1347.0 845.4 L1346.8 848.8 L1346.6 851.8 L1346.3 854.6 L1346.0 857.3 L1345.6 860.0 L1345.2 862.9 L1344.8 866.1 L1344.4 869.6 L1343.9 873.4 L1343.4 877.4 L1342.9 881.5 L1342.3 885.6 L1341.6 889.6 L1340.9 893.5 L1340.2 897.1 L1339.4 900.5 L1338.5 903.7 L1337.6 906.7 L1336.7 909.5 L1335.6 912.2 L1334.6 914.8 L1333.5 917.4 L1332.3 920.0 L1331.1 922.5 L1329.8 925.1 L1328.5 927.7 L1327.1 930.2 L1325.7 932.6 L1324.2 935.0 L1322.5 937.2 L1320.8 939.4 L1319.1 941.4 L1317.2 943.4 L1315.2 945.2 L1313.2 946.9 L1311.0 948.5 L1308.8 950.0 L1306.5 951.4 L1304.1 952.6 L1301.6 953.8 L1299.0 954.9 L1296.4 955.8 L1293.6 956.7 L1290.8 957.5 L1287.9 958.2 L1284.9 958.8 L1281.8 959.4 L1278.6 959.9 L1275.4 960.4 L1272.0 960.7 L1268.6 961.1 L1265.1 961.3 L1261.4 961.5 L1257.7 961.6 L1253.8 961.7 L1249.9 961.6 L1245.8 961.5 L1241.6 961.4 L1237.4 961.1 L1233.3 960.8 L1229.3 960.5 L1225.6 960.2 L1222.1 959.8 L1218.9 959.4 L1216.0 959.0 L1213.2 958.5 L1210.5 958.0 L1207.7 957.5 L1204.7 956.9 L1201.2 956.1 L1197.4 955.3 L1193.0 954.4 L1188.1 953.4 L1182.9 952.3 L1177.2 951.2 L1171.4 950.0 L1165.3 948.7 L1159.0 947.5 L1152.7 946.3 L1146.2 945.1 L1139.7 943.8 L1133.1 942.6 L1126.4 941.4 L1119.5 940.2 L1112.7 938.9 L1105.7 937.6 L1098.6 936.3 L1091.5 935.0 L1084.3 933.6 L1077.1 932.3 L1070.0 931.0 L1063.0 929.7 L1056.3 928.5 L1050.0 927.5 L1044.1 926.6 L1038.7 925.8 L1033.7 925.2 L1029.0 924.7 L1024.6 924.4 L1020.3 924.2 L1015.9 924.1 L1011.3 924.1 L1006.5 924.1 L1001.3 924.3 L996.0 924.5 L990.4 924.8 L984.6 925.3 L978.7 925.8 L972.7 926.4 L966.8 927.1 L960.8 927.9 L954.9 928.7 L949.0 929.7 L943.2 930.8 L937.3 932.0 L931.4 933.2 L925.6 934.6 L919.7 936.0 L913.8 937.6 L907.9 939.3 L902.0 941.1 L896.1 942.9 L890.3 944.8 L884.4 946.8 L878.6 948.8 L872.8 950.7 L867.0 952.7 L861.2 954.6 L855.4 956.5 L849.7 958.4 L844.2 960.2 L839.0 961.9 L834.1 963.6 L829.6 965.1 L825.3 965.3" stroke="#1b1b1b" stroke-width="1.90" fill="none"/><g stroke="#1e1e1e" stroke-width="5.6" fill="none" stroke-linecap="round" stroke-linejoin="round"><path d="M1090.4 806.0 C1091.1 804.4 1093.2 801.3 1094.5 796.5 C1095.8 791.7 1097.4 780.5 1098.3 777.0 C1099.2 773.5 1099.1 775.1 1099.8 775.5 C1100.5 775.9 1101.3 775.8 1102.7 779.5 C1104.1 783.2 1106.8 796.0 1108.4 797.8 C1110.0 799.6 1111.0 793.7 1112.1 790.2 C1113.1 786.7 1113.8 778.8 1114.7 777.0 C1115.7 775.2 1116.9 776.2 1117.8 779.5 C1118.7 782.8 1119.3 791.1 1120.3 796.5 C1121.2 801.9 1123.0 809.1 1123.5 811.6"/><path d="M1135.5 799.3 C1136.8 799.4 1140.8 800.7 1143.0 800.0 C1145.2 799.3 1148.1 796.9 1148.7 795.3 C1149.3 793.7 1148.0 791.2 1146.8 790.2 C1145.6 789.2 1143.7 789.2 1141.8 789.6 C1139.9 790.0 1137.4 790.8 1135.5 792.7 C1133.6 794.6 1131.0 798.2 1130.4 800.9 C1129.8 803.6 1130.1 807.0 1131.7 809.1 C1133.3 811.2 1137.4 812.9 1139.9 813.5 C1142.4 814.1 1144.4 813.5 1146.8 812.9 C1149.2 812.3 1153.1 810.5 1154.4 810.0"/><path d="M1158.1 792.7 C1159.8 792.1 1164.6 789.1 1168.2 789.0 C1171.8 788.9 1177.3 790.6 1179.6 792.1 C1181.9 793.6 1182.3 795.8 1182.1 797.8 C1181.9 799.8 1180.6 802.6 1178.3 804.1 C1176.0 805.6 1171.2 806.4 1168.2 806.6 C1165.2 806.8 1161.8 806.7 1160.0 805.3 C1158.2 803.9 1157.6 800.4 1157.5 798.4 C1157.4 796.4 1159.1 794.2 1159.4 793.4"/><path d="M1189.7 790.2 C1189.5 791.5 1188.3 795.0 1188.4 797.8 C1188.5 800.6 1188.6 807.0 1190.3 807.2 C1192.0 807.4 1196.5 799.1 1198.5 799.0 C1200.5 798.9 1198.9 808.5 1202.3 806.6 C1205.7 804.7 1216.0 790.9 1218.7 787.7"/></g></svg><!--/CANVAS-->
<!-- excalidraw toolbar -->
<div class="a" style="left:1098px;top:396.5px;width:827px;height:74.5px;background:#fff;border-radius:12px;box-shadow:0 0 0 1px #e9eaee,0 2px 16px rgba(0,0,0,0.075)"></div>
<div class="a" style="left:1174px;top:403px;width:61px;height:62px;background:#f2f2f4;border-radius:10px"></div>
<div class="a" style="left:1255px;top:414px;width:2px;height:40px;background:#d9d4c6"></div>
<div class="a" style="left:1767px;top:414px;width:2px;height:40px;background:#d9d4c6"></div>
<svg class="a" style="left:0;top:0" width="3024" height="500" fill="none" stroke="#495057" stroke-width="1.7" stroke-linecap="round" stroke-linejoin="round">
 <!-- hand (tabler hand-stop) -->
 <g transform="translate(1120.6,420.4) scale(1.2)" stroke-width="1.42">
  <path d="M8 13v-7.5a1.5 1.5 0 0 1 3 0v6.5"/><path d="M11 5.5v-2a1.5 1.5 0 1 1 3 0v8.5"/><path d="M14 5.5a1.5 1.5 0 0 1 3 0v6.5"/>
  <path d="M17 7.5a1.5 1.5 0 0 1 3 0v8.5a6 6 0 0 1 -6 6h-2h.208a6 6 0 0 1 -5.012 -2.7a69.74 69.74 0 0 1 -.196 -.3c-.312 -.479 -1.407 -2.388 -3.286 -5.728a1.5 1.5 0 0 1 .536 -2.022a1.867 1.867 0 0 1 2.28 .28l1.47 1.47"/>
 </g>
 <!-- pointer -->
 <path d="M1197.2 428.3 L1212.6 434.3 L1205.2 437.2 L1203 443.6 Z" fill="#495057" stroke-width="1.2"/>
 <line x1="1205" y1="437" x2="1212.6" y2="443.6" stroke-width="1.7"/>
 <!-- rect -->
 <rect x="1298.9" y="425.6" width="17.6" height="18" rx="2.6"/>
 <!-- diamond -->
 <path d="M1375.6 424.3 L1385.6 434.5 L1375.6 444.9 L1365.5 434.5 Z" stroke-linejoin="round"/>
 <circle cx="1443.2" cy="434.6" r="10"/>
 <!-- arrow -->
 <line x1="1502.8" y1="434.6" x2="1519.8" y2="434.6"/><polyline points="1514.6,429.3 1519.8,434.6 1514.6,439.9"/>
 <!-- line -->
 <line x1="1570.8" y1="434.5" x2="1588" y2="434.5"/>
 <!-- pencil -->
 <g transform="translate(1634.3,422.5) scale(1.05)" stroke-width="1.6"><path d="M4 20h4l10.5 -10.5a2.828 2.828 0 1 0 -4 -4l-10.5 10.5v4"/><path d="M13.5 6.5l4 4"/></g>
 <!-- text A -->
 <g transform="translate(1702,420.7) scale(1.14)" stroke-width="1.45"><path d="M4 20l3 0"/><path d="M14 20l7 0"/><path d="M6.9 15l6.9 0"/><path d="M10.2 6.3l5.8 13.7"/><path d="M5 20l6 -16l2 0l7 16"/></g>
 <!-- duplicate -->
 <path d="M1814.4 439.8 H1812.7 A3 3 0 0 1 1809.7 436.8 V427.4 A3 3 0 0 1 1812.7 424.4 H1821.8 A3 3 0 0 1 1824.8 427.4 V429.2"/>
 <rect x="1814.4" y="429.3" width="15" height="15.5" rx="3.2"/>
 <!-- trash -->
 <line x1="1878.3" y1="429" x2="1896.8" y2="429"/>
 <path d="M1883.6 429 V425.5 A1 1 0 0 1 1884.6 424.5 H1890.4 A1 1 0 0 1 1891.4 425.5 V429"/>
 <path d="M1879.6 429 L1880.8 441.6 A2.6 2.6 0 0 0 1883.4 444.2 H1892.2 A2.6 2.6 0 0 0 1894.8 441.6 L1895.6 429"/>
 <line x1="1885.4" y1="433.4" x2="1885.4" y2="440.2"/><line x1="1889.8" y1="433.4" x2="1889.8" y2="440.2"/>
</svg>

<!-- zoom controls -->
<div class="a" style="left:27.5px;top:1876.5px;width:224px;height:60.5px;border:1.5px solid #d8d4c8;border-radius:12px;background:#fff"></div>
<div class="a" style="left:86.5px;top:1877px;width:1.5px;height:59.5px;background:#d8d4c8"></div>
<div class="a" style="left:190.5px;top:1877px;width:1.5px;height:59.5px;background:#d8d4c8"></div>
<svg class="a" style="left:0;top:1850px" width="300" height="114" stroke="#495057" stroke-width="1.8" stroke-linecap="round"><line x1="50.5" y1="56.5" x2="64.8" y2="56.5"/><line x1="213.5" y1="56.5" x2="230" y2="56.5"/><line x1="221.7" y1="48.3" x2="221.7" y2="64.8"/></svg>
<div class="a" id="zpct" style="left:113px;top:1897px;font-size:17.5px;color:#333;white-space:nowrap;transform:scaleX(1.2);transform-origin:0 0">100%</div>
<div class="a serif" id="foot" style="left:1148px;top:1904px;font-size:21px;letter-spacing:0.25px;-webkit-text-stroke:0.3px #b9b6ab;color:#b9b6ab;white-space:nowrap">To move canvas, hold mouse wheel or spacebar while dragging, or use the hand tool</div>
<div class="a" style="left:0;top:1963px;width:3024px;height:1px;background:#ebebeb"></div>
</body></html>
